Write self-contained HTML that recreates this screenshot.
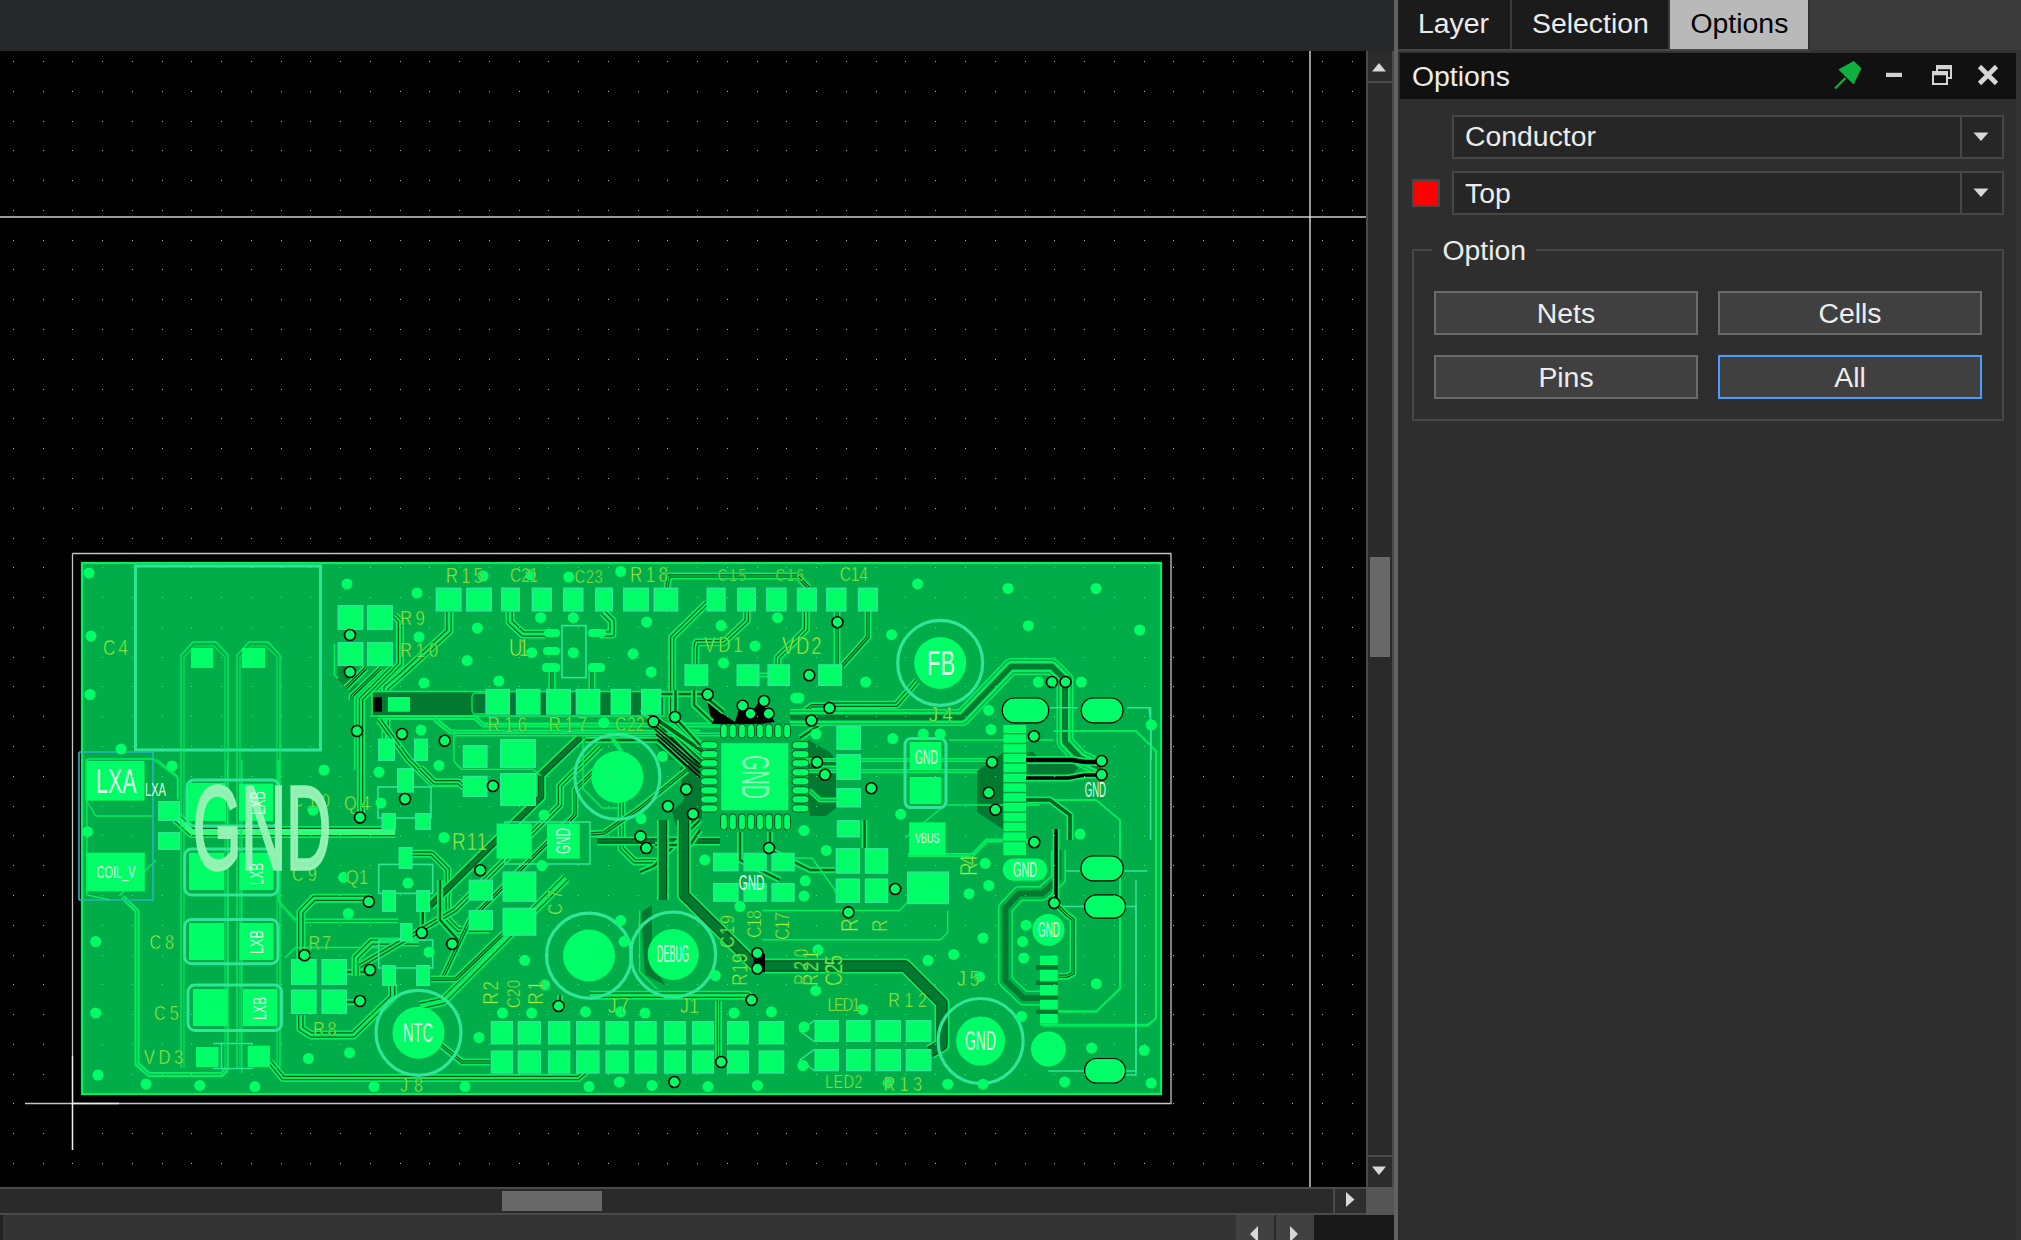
<!DOCTYPE html><html><head><meta charset="utf-8"><style>html,body{margin:0;padding:0}body{width:2021px;height:1240px;overflow:hidden;position:relative;background:#2e2e2e;font-family:'Liberation Sans',sans-serif;}svg{position:absolute;display:block}</style></head><body>
<div style="position:absolute;left:0px;top:0px;width:1394px;height:51px;background:#27282a"></div>
<svg style="left:0;top:51px" width="1366" height="1136" viewBox="0 51 1366 1136">
<rect x="0" y="51" width="1366" height="1136" fill="#000"/>
<path d="M13 61h1v1h-1zM43 61h1v1h-1zM72 61h1v1h-1zM102 61h1v1h-1zM132 61h1v1h-1zM162 61h1v1h-1zM191 61h1v1h-1zM221 61h1v1h-1zM251 61h1v1h-1zM281 61h1v1h-1zM310 61h1v1h-1zM340 61h1v1h-1zM370 61h1v1h-1zM400 61h1v1h-1zM429 61h1v1h-1zM459 61h1v1h-1zM489 61h1v1h-1zM519 61h1v1h-1zM548 61h1v1h-1zM578 61h1v1h-1zM608 61h1v1h-1zM638 61h1v1h-1zM667 61h1v1h-1zM697 61h1v1h-1zM727 61h1v1h-1zM757 61h1v1h-1zM786 61h1v1h-1zM816 61h1v1h-1zM846 61h1v1h-1zM876 61h1v1h-1zM905 61h1v1h-1zM935 61h1v1h-1zM965 61h1v1h-1zM995 61h1v1h-1zM1025 61h1v1h-1zM1054 61h1v1h-1zM1084 61h1v1h-1zM1114 61h1v1h-1zM1144 61h1v1h-1zM1173 61h1v1h-1zM1203 61h1v1h-1zM1233 61h1v1h-1zM1263 61h1v1h-1zM1292 61h1v1h-1zM1322 61h1v1h-1zM1352 61h1v1h-1zM13 91h1v1h-1zM43 91h1v1h-1zM72 91h1v1h-1zM102 91h1v1h-1zM132 91h1v1h-1zM162 91h1v1h-1zM191 91h1v1h-1zM221 91h1v1h-1zM251 91h1v1h-1zM281 91h1v1h-1zM310 91h1v1h-1zM340 91h1v1h-1zM370 91h1v1h-1zM400 91h1v1h-1zM429 91h1v1h-1zM459 91h1v1h-1zM489 91h1v1h-1zM519 91h1v1h-1zM548 91h1v1h-1zM578 91h1v1h-1zM608 91h1v1h-1zM638 91h1v1h-1zM667 91h1v1h-1zM697 91h1v1h-1zM727 91h1v1h-1zM757 91h1v1h-1zM786 91h1v1h-1zM816 91h1v1h-1zM846 91h1v1h-1zM876 91h1v1h-1zM905 91h1v1h-1zM935 91h1v1h-1zM965 91h1v1h-1zM995 91h1v1h-1zM1025 91h1v1h-1zM1054 91h1v1h-1zM1084 91h1v1h-1zM1114 91h1v1h-1zM1144 91h1v1h-1zM1173 91h1v1h-1zM1203 91h1v1h-1zM1233 91h1v1h-1zM1263 91h1v1h-1zM1292 91h1v1h-1zM1322 91h1v1h-1zM1352 91h1v1h-1zM13 121h1v1h-1zM43 121h1v1h-1zM72 121h1v1h-1zM102 121h1v1h-1zM132 121h1v1h-1zM162 121h1v1h-1zM191 121h1v1h-1zM221 121h1v1h-1zM251 121h1v1h-1zM281 121h1v1h-1zM310 121h1v1h-1zM340 121h1v1h-1zM370 121h1v1h-1zM400 121h1v1h-1zM429 121h1v1h-1zM459 121h1v1h-1zM489 121h1v1h-1zM519 121h1v1h-1zM548 121h1v1h-1zM578 121h1v1h-1zM608 121h1v1h-1zM638 121h1v1h-1zM667 121h1v1h-1zM697 121h1v1h-1zM727 121h1v1h-1zM757 121h1v1h-1zM786 121h1v1h-1zM816 121h1v1h-1zM846 121h1v1h-1zM876 121h1v1h-1zM905 121h1v1h-1zM935 121h1v1h-1zM965 121h1v1h-1zM995 121h1v1h-1zM1025 121h1v1h-1zM1054 121h1v1h-1zM1084 121h1v1h-1zM1114 121h1v1h-1zM1144 121h1v1h-1zM1173 121h1v1h-1zM1203 121h1v1h-1zM1233 121h1v1h-1zM1263 121h1v1h-1zM1292 121h1v1h-1zM1322 121h1v1h-1zM1352 121h1v1h-1zM13 150h1v1h-1zM43 150h1v1h-1zM72 150h1v1h-1zM102 150h1v1h-1zM132 150h1v1h-1zM162 150h1v1h-1zM191 150h1v1h-1zM221 150h1v1h-1zM251 150h1v1h-1zM281 150h1v1h-1zM310 150h1v1h-1zM340 150h1v1h-1zM370 150h1v1h-1zM400 150h1v1h-1zM429 150h1v1h-1zM459 150h1v1h-1zM489 150h1v1h-1zM519 150h1v1h-1zM548 150h1v1h-1zM578 150h1v1h-1zM608 150h1v1h-1zM638 150h1v1h-1zM667 150h1v1h-1zM697 150h1v1h-1zM727 150h1v1h-1zM757 150h1v1h-1zM786 150h1v1h-1zM816 150h1v1h-1zM846 150h1v1h-1zM876 150h1v1h-1zM905 150h1v1h-1zM935 150h1v1h-1zM965 150h1v1h-1zM995 150h1v1h-1zM1025 150h1v1h-1zM1054 150h1v1h-1zM1084 150h1v1h-1zM1114 150h1v1h-1zM1144 150h1v1h-1zM1173 150h1v1h-1zM1203 150h1v1h-1zM1233 150h1v1h-1zM1263 150h1v1h-1zM1292 150h1v1h-1zM1322 150h1v1h-1zM1352 150h1v1h-1zM13 180h1v1h-1zM43 180h1v1h-1zM72 180h1v1h-1zM102 180h1v1h-1zM132 180h1v1h-1zM162 180h1v1h-1zM191 180h1v1h-1zM221 180h1v1h-1zM251 180h1v1h-1zM281 180h1v1h-1zM310 180h1v1h-1zM340 180h1v1h-1zM370 180h1v1h-1zM400 180h1v1h-1zM429 180h1v1h-1zM459 180h1v1h-1zM489 180h1v1h-1zM519 180h1v1h-1zM548 180h1v1h-1zM578 180h1v1h-1zM608 180h1v1h-1zM638 180h1v1h-1zM667 180h1v1h-1zM697 180h1v1h-1zM727 180h1v1h-1zM757 180h1v1h-1zM786 180h1v1h-1zM816 180h1v1h-1zM846 180h1v1h-1zM876 180h1v1h-1zM905 180h1v1h-1zM935 180h1v1h-1zM965 180h1v1h-1zM995 180h1v1h-1zM1025 180h1v1h-1zM1054 180h1v1h-1zM1084 180h1v1h-1zM1114 180h1v1h-1zM1144 180h1v1h-1zM1173 180h1v1h-1zM1203 180h1v1h-1zM1233 180h1v1h-1zM1263 180h1v1h-1zM1292 180h1v1h-1zM1322 180h1v1h-1zM1352 180h1v1h-1zM13 210h1v1h-1zM43 210h1v1h-1zM72 210h1v1h-1zM102 210h1v1h-1zM132 210h1v1h-1zM162 210h1v1h-1zM191 210h1v1h-1zM221 210h1v1h-1zM251 210h1v1h-1zM281 210h1v1h-1zM310 210h1v1h-1zM340 210h1v1h-1zM370 210h1v1h-1zM400 210h1v1h-1zM429 210h1v1h-1zM459 210h1v1h-1zM489 210h1v1h-1zM519 210h1v1h-1zM548 210h1v1h-1zM578 210h1v1h-1zM608 210h1v1h-1zM638 210h1v1h-1zM667 210h1v1h-1zM697 210h1v1h-1zM727 210h1v1h-1zM757 210h1v1h-1zM786 210h1v1h-1zM816 210h1v1h-1zM846 210h1v1h-1zM876 210h1v1h-1zM905 210h1v1h-1zM935 210h1v1h-1zM965 210h1v1h-1zM995 210h1v1h-1zM1025 210h1v1h-1zM1054 210h1v1h-1zM1084 210h1v1h-1zM1114 210h1v1h-1zM1144 210h1v1h-1zM1173 210h1v1h-1zM1203 210h1v1h-1zM1233 210h1v1h-1zM1263 210h1v1h-1zM1292 210h1v1h-1zM1322 210h1v1h-1zM1352 210h1v1h-1zM13 240h1v1h-1zM43 240h1v1h-1zM72 240h1v1h-1zM102 240h1v1h-1zM132 240h1v1h-1zM162 240h1v1h-1zM191 240h1v1h-1zM221 240h1v1h-1zM251 240h1v1h-1zM281 240h1v1h-1zM310 240h1v1h-1zM340 240h1v1h-1zM370 240h1v1h-1zM400 240h1v1h-1zM429 240h1v1h-1zM459 240h1v1h-1zM489 240h1v1h-1zM519 240h1v1h-1zM548 240h1v1h-1zM578 240h1v1h-1zM608 240h1v1h-1zM638 240h1v1h-1zM667 240h1v1h-1zM697 240h1v1h-1zM727 240h1v1h-1zM757 240h1v1h-1zM786 240h1v1h-1zM816 240h1v1h-1zM846 240h1v1h-1zM876 240h1v1h-1zM905 240h1v1h-1zM935 240h1v1h-1zM965 240h1v1h-1zM995 240h1v1h-1zM1025 240h1v1h-1zM1054 240h1v1h-1zM1084 240h1v1h-1zM1114 240h1v1h-1zM1144 240h1v1h-1zM1173 240h1v1h-1zM1203 240h1v1h-1zM1233 240h1v1h-1zM1263 240h1v1h-1zM1292 240h1v1h-1zM1322 240h1v1h-1zM1352 240h1v1h-1zM13 269h1v1h-1zM43 269h1v1h-1zM72 269h1v1h-1zM102 269h1v1h-1zM132 269h1v1h-1zM162 269h1v1h-1zM191 269h1v1h-1zM221 269h1v1h-1zM251 269h1v1h-1zM281 269h1v1h-1zM310 269h1v1h-1zM340 269h1v1h-1zM370 269h1v1h-1zM400 269h1v1h-1zM429 269h1v1h-1zM459 269h1v1h-1zM489 269h1v1h-1zM519 269h1v1h-1zM548 269h1v1h-1zM578 269h1v1h-1zM608 269h1v1h-1zM638 269h1v1h-1zM667 269h1v1h-1zM697 269h1v1h-1zM727 269h1v1h-1zM757 269h1v1h-1zM786 269h1v1h-1zM816 269h1v1h-1zM846 269h1v1h-1zM876 269h1v1h-1zM905 269h1v1h-1zM935 269h1v1h-1zM965 269h1v1h-1zM995 269h1v1h-1zM1025 269h1v1h-1zM1054 269h1v1h-1zM1084 269h1v1h-1zM1114 269h1v1h-1zM1144 269h1v1h-1zM1173 269h1v1h-1zM1203 269h1v1h-1zM1233 269h1v1h-1zM1263 269h1v1h-1zM1292 269h1v1h-1zM1322 269h1v1h-1zM1352 269h1v1h-1zM13 299h1v1h-1zM43 299h1v1h-1zM72 299h1v1h-1zM102 299h1v1h-1zM132 299h1v1h-1zM162 299h1v1h-1zM191 299h1v1h-1zM221 299h1v1h-1zM251 299h1v1h-1zM281 299h1v1h-1zM310 299h1v1h-1zM340 299h1v1h-1zM370 299h1v1h-1zM400 299h1v1h-1zM429 299h1v1h-1zM459 299h1v1h-1zM489 299h1v1h-1zM519 299h1v1h-1zM548 299h1v1h-1zM578 299h1v1h-1zM608 299h1v1h-1zM638 299h1v1h-1zM667 299h1v1h-1zM697 299h1v1h-1zM727 299h1v1h-1zM757 299h1v1h-1zM786 299h1v1h-1zM816 299h1v1h-1zM846 299h1v1h-1zM876 299h1v1h-1zM905 299h1v1h-1zM935 299h1v1h-1zM965 299h1v1h-1zM995 299h1v1h-1zM1025 299h1v1h-1zM1054 299h1v1h-1zM1084 299h1v1h-1zM1114 299h1v1h-1zM1144 299h1v1h-1zM1173 299h1v1h-1zM1203 299h1v1h-1zM1233 299h1v1h-1zM1263 299h1v1h-1zM1292 299h1v1h-1zM1322 299h1v1h-1zM1352 299h1v1h-1zM13 329h1v1h-1zM43 329h1v1h-1zM72 329h1v1h-1zM102 329h1v1h-1zM132 329h1v1h-1zM162 329h1v1h-1zM191 329h1v1h-1zM221 329h1v1h-1zM251 329h1v1h-1zM281 329h1v1h-1zM310 329h1v1h-1zM340 329h1v1h-1zM370 329h1v1h-1zM400 329h1v1h-1zM429 329h1v1h-1zM459 329h1v1h-1zM489 329h1v1h-1zM519 329h1v1h-1zM548 329h1v1h-1zM578 329h1v1h-1zM608 329h1v1h-1zM638 329h1v1h-1zM667 329h1v1h-1zM697 329h1v1h-1zM727 329h1v1h-1zM757 329h1v1h-1zM786 329h1v1h-1zM816 329h1v1h-1zM846 329h1v1h-1zM876 329h1v1h-1zM905 329h1v1h-1zM935 329h1v1h-1zM965 329h1v1h-1zM995 329h1v1h-1zM1025 329h1v1h-1zM1054 329h1v1h-1zM1084 329h1v1h-1zM1114 329h1v1h-1zM1144 329h1v1h-1zM1173 329h1v1h-1zM1203 329h1v1h-1zM1233 329h1v1h-1zM1263 329h1v1h-1zM1292 329h1v1h-1zM1322 329h1v1h-1zM1352 329h1v1h-1zM13 359h1v1h-1zM43 359h1v1h-1zM72 359h1v1h-1zM102 359h1v1h-1zM132 359h1v1h-1zM162 359h1v1h-1zM191 359h1v1h-1zM221 359h1v1h-1zM251 359h1v1h-1zM281 359h1v1h-1zM310 359h1v1h-1zM340 359h1v1h-1zM370 359h1v1h-1zM400 359h1v1h-1zM429 359h1v1h-1zM459 359h1v1h-1zM489 359h1v1h-1zM519 359h1v1h-1zM548 359h1v1h-1zM578 359h1v1h-1zM608 359h1v1h-1zM638 359h1v1h-1zM667 359h1v1h-1zM697 359h1v1h-1zM727 359h1v1h-1zM757 359h1v1h-1zM786 359h1v1h-1zM816 359h1v1h-1zM846 359h1v1h-1zM876 359h1v1h-1zM905 359h1v1h-1zM935 359h1v1h-1zM965 359h1v1h-1zM995 359h1v1h-1zM1025 359h1v1h-1zM1054 359h1v1h-1zM1084 359h1v1h-1zM1114 359h1v1h-1zM1144 359h1v1h-1zM1173 359h1v1h-1zM1203 359h1v1h-1zM1233 359h1v1h-1zM1263 359h1v1h-1zM1292 359h1v1h-1zM1322 359h1v1h-1zM1352 359h1v1h-1zM13 389h1v1h-1zM43 389h1v1h-1zM72 389h1v1h-1zM102 389h1v1h-1zM132 389h1v1h-1zM162 389h1v1h-1zM191 389h1v1h-1zM221 389h1v1h-1zM251 389h1v1h-1zM281 389h1v1h-1zM310 389h1v1h-1zM340 389h1v1h-1zM370 389h1v1h-1zM400 389h1v1h-1zM429 389h1v1h-1zM459 389h1v1h-1zM489 389h1v1h-1zM519 389h1v1h-1zM548 389h1v1h-1zM578 389h1v1h-1zM608 389h1v1h-1zM638 389h1v1h-1zM667 389h1v1h-1zM697 389h1v1h-1zM727 389h1v1h-1zM757 389h1v1h-1zM786 389h1v1h-1zM816 389h1v1h-1zM846 389h1v1h-1zM876 389h1v1h-1zM905 389h1v1h-1zM935 389h1v1h-1zM965 389h1v1h-1zM995 389h1v1h-1zM1025 389h1v1h-1zM1054 389h1v1h-1zM1084 389h1v1h-1zM1114 389h1v1h-1zM1144 389h1v1h-1zM1173 389h1v1h-1zM1203 389h1v1h-1zM1233 389h1v1h-1zM1263 389h1v1h-1zM1292 389h1v1h-1zM1322 389h1v1h-1zM1352 389h1v1h-1zM13 418h1v1h-1zM43 418h1v1h-1zM72 418h1v1h-1zM102 418h1v1h-1zM132 418h1v1h-1zM162 418h1v1h-1zM191 418h1v1h-1zM221 418h1v1h-1zM251 418h1v1h-1zM281 418h1v1h-1zM310 418h1v1h-1zM340 418h1v1h-1zM370 418h1v1h-1zM400 418h1v1h-1zM429 418h1v1h-1zM459 418h1v1h-1zM489 418h1v1h-1zM519 418h1v1h-1zM548 418h1v1h-1zM578 418h1v1h-1zM608 418h1v1h-1zM638 418h1v1h-1zM667 418h1v1h-1zM697 418h1v1h-1zM727 418h1v1h-1zM757 418h1v1h-1zM786 418h1v1h-1zM816 418h1v1h-1zM846 418h1v1h-1zM876 418h1v1h-1zM905 418h1v1h-1zM935 418h1v1h-1zM965 418h1v1h-1zM995 418h1v1h-1zM1025 418h1v1h-1zM1054 418h1v1h-1zM1084 418h1v1h-1zM1114 418h1v1h-1zM1144 418h1v1h-1zM1173 418h1v1h-1zM1203 418h1v1h-1zM1233 418h1v1h-1zM1263 418h1v1h-1zM1292 418h1v1h-1zM1322 418h1v1h-1zM1352 418h1v1h-1zM13 448h1v1h-1zM43 448h1v1h-1zM72 448h1v1h-1zM102 448h1v1h-1zM132 448h1v1h-1zM162 448h1v1h-1zM191 448h1v1h-1zM221 448h1v1h-1zM251 448h1v1h-1zM281 448h1v1h-1zM310 448h1v1h-1zM340 448h1v1h-1zM370 448h1v1h-1zM400 448h1v1h-1zM429 448h1v1h-1zM459 448h1v1h-1zM489 448h1v1h-1zM519 448h1v1h-1zM548 448h1v1h-1zM578 448h1v1h-1zM608 448h1v1h-1zM638 448h1v1h-1zM667 448h1v1h-1zM697 448h1v1h-1zM727 448h1v1h-1zM757 448h1v1h-1zM786 448h1v1h-1zM816 448h1v1h-1zM846 448h1v1h-1zM876 448h1v1h-1zM905 448h1v1h-1zM935 448h1v1h-1zM965 448h1v1h-1zM995 448h1v1h-1zM1025 448h1v1h-1zM1054 448h1v1h-1zM1084 448h1v1h-1zM1114 448h1v1h-1zM1144 448h1v1h-1zM1173 448h1v1h-1zM1203 448h1v1h-1zM1233 448h1v1h-1zM1263 448h1v1h-1zM1292 448h1v1h-1zM1322 448h1v1h-1zM1352 448h1v1h-1zM13 478h1v1h-1zM43 478h1v1h-1zM72 478h1v1h-1zM102 478h1v1h-1zM132 478h1v1h-1zM162 478h1v1h-1zM191 478h1v1h-1zM221 478h1v1h-1zM251 478h1v1h-1zM281 478h1v1h-1zM310 478h1v1h-1zM340 478h1v1h-1zM370 478h1v1h-1zM400 478h1v1h-1zM429 478h1v1h-1zM459 478h1v1h-1zM489 478h1v1h-1zM519 478h1v1h-1zM548 478h1v1h-1zM578 478h1v1h-1zM608 478h1v1h-1zM638 478h1v1h-1zM667 478h1v1h-1zM697 478h1v1h-1zM727 478h1v1h-1zM757 478h1v1h-1zM786 478h1v1h-1zM816 478h1v1h-1zM846 478h1v1h-1zM876 478h1v1h-1zM905 478h1v1h-1zM935 478h1v1h-1zM965 478h1v1h-1zM995 478h1v1h-1zM1025 478h1v1h-1zM1054 478h1v1h-1zM1084 478h1v1h-1zM1114 478h1v1h-1zM1144 478h1v1h-1zM1173 478h1v1h-1zM1203 478h1v1h-1zM1233 478h1v1h-1zM1263 478h1v1h-1zM1292 478h1v1h-1zM1322 478h1v1h-1zM1352 478h1v1h-1zM13 508h1v1h-1zM43 508h1v1h-1zM72 508h1v1h-1zM102 508h1v1h-1zM132 508h1v1h-1zM162 508h1v1h-1zM191 508h1v1h-1zM221 508h1v1h-1zM251 508h1v1h-1zM281 508h1v1h-1zM310 508h1v1h-1zM340 508h1v1h-1zM370 508h1v1h-1zM400 508h1v1h-1zM429 508h1v1h-1zM459 508h1v1h-1zM489 508h1v1h-1zM519 508h1v1h-1zM548 508h1v1h-1zM578 508h1v1h-1zM608 508h1v1h-1zM638 508h1v1h-1zM667 508h1v1h-1zM697 508h1v1h-1zM727 508h1v1h-1zM757 508h1v1h-1zM786 508h1v1h-1zM816 508h1v1h-1zM846 508h1v1h-1zM876 508h1v1h-1zM905 508h1v1h-1zM935 508h1v1h-1zM965 508h1v1h-1zM995 508h1v1h-1zM1025 508h1v1h-1zM1054 508h1v1h-1zM1084 508h1v1h-1zM1114 508h1v1h-1zM1144 508h1v1h-1zM1173 508h1v1h-1zM1203 508h1v1h-1zM1233 508h1v1h-1zM1263 508h1v1h-1zM1292 508h1v1h-1zM1322 508h1v1h-1zM1352 508h1v1h-1zM13 538h1v1h-1zM43 538h1v1h-1zM72 538h1v1h-1zM102 538h1v1h-1zM132 538h1v1h-1zM162 538h1v1h-1zM191 538h1v1h-1zM221 538h1v1h-1zM251 538h1v1h-1zM281 538h1v1h-1zM310 538h1v1h-1zM340 538h1v1h-1zM370 538h1v1h-1zM400 538h1v1h-1zM429 538h1v1h-1zM459 538h1v1h-1zM489 538h1v1h-1zM519 538h1v1h-1zM548 538h1v1h-1zM578 538h1v1h-1zM608 538h1v1h-1zM638 538h1v1h-1zM667 538h1v1h-1zM697 538h1v1h-1zM727 538h1v1h-1zM757 538h1v1h-1zM786 538h1v1h-1zM816 538h1v1h-1zM846 538h1v1h-1zM876 538h1v1h-1zM905 538h1v1h-1zM935 538h1v1h-1zM965 538h1v1h-1zM995 538h1v1h-1zM1025 538h1v1h-1zM1054 538h1v1h-1zM1084 538h1v1h-1zM1114 538h1v1h-1zM1144 538h1v1h-1zM1173 538h1v1h-1zM1203 538h1v1h-1zM1233 538h1v1h-1zM1263 538h1v1h-1zM1292 538h1v1h-1zM1322 538h1v1h-1zM1352 538h1v1h-1zM13 567h1v1h-1zM43 567h1v1h-1zM72 567h1v1h-1zM102 567h1v1h-1zM132 567h1v1h-1zM162 567h1v1h-1zM191 567h1v1h-1zM221 567h1v1h-1zM251 567h1v1h-1zM281 567h1v1h-1zM310 567h1v1h-1zM340 567h1v1h-1zM370 567h1v1h-1zM400 567h1v1h-1zM429 567h1v1h-1zM459 567h1v1h-1zM489 567h1v1h-1zM519 567h1v1h-1zM548 567h1v1h-1zM578 567h1v1h-1zM608 567h1v1h-1zM638 567h1v1h-1zM667 567h1v1h-1zM697 567h1v1h-1zM727 567h1v1h-1zM757 567h1v1h-1zM786 567h1v1h-1zM816 567h1v1h-1zM846 567h1v1h-1zM876 567h1v1h-1zM905 567h1v1h-1zM935 567h1v1h-1zM965 567h1v1h-1zM995 567h1v1h-1zM1025 567h1v1h-1zM1054 567h1v1h-1zM1084 567h1v1h-1zM1114 567h1v1h-1zM1144 567h1v1h-1zM1173 567h1v1h-1zM1203 567h1v1h-1zM1233 567h1v1h-1zM1263 567h1v1h-1zM1292 567h1v1h-1zM1322 567h1v1h-1zM1352 567h1v1h-1zM13 597h1v1h-1zM43 597h1v1h-1zM72 597h1v1h-1zM102 597h1v1h-1zM132 597h1v1h-1zM162 597h1v1h-1zM191 597h1v1h-1zM221 597h1v1h-1zM251 597h1v1h-1zM281 597h1v1h-1zM310 597h1v1h-1zM340 597h1v1h-1zM370 597h1v1h-1zM400 597h1v1h-1zM429 597h1v1h-1zM459 597h1v1h-1zM489 597h1v1h-1zM519 597h1v1h-1zM548 597h1v1h-1zM578 597h1v1h-1zM608 597h1v1h-1zM638 597h1v1h-1zM667 597h1v1h-1zM697 597h1v1h-1zM727 597h1v1h-1zM757 597h1v1h-1zM786 597h1v1h-1zM816 597h1v1h-1zM846 597h1v1h-1zM876 597h1v1h-1zM905 597h1v1h-1zM935 597h1v1h-1zM965 597h1v1h-1zM995 597h1v1h-1zM1025 597h1v1h-1zM1054 597h1v1h-1zM1084 597h1v1h-1zM1114 597h1v1h-1zM1144 597h1v1h-1zM1173 597h1v1h-1zM1203 597h1v1h-1zM1233 597h1v1h-1zM1263 597h1v1h-1zM1292 597h1v1h-1zM1322 597h1v1h-1zM1352 597h1v1h-1zM13 627h1v1h-1zM43 627h1v1h-1zM72 627h1v1h-1zM102 627h1v1h-1zM132 627h1v1h-1zM162 627h1v1h-1zM191 627h1v1h-1zM221 627h1v1h-1zM251 627h1v1h-1zM281 627h1v1h-1zM310 627h1v1h-1zM340 627h1v1h-1zM370 627h1v1h-1zM400 627h1v1h-1zM429 627h1v1h-1zM459 627h1v1h-1zM489 627h1v1h-1zM519 627h1v1h-1zM548 627h1v1h-1zM578 627h1v1h-1zM608 627h1v1h-1zM638 627h1v1h-1zM667 627h1v1h-1zM697 627h1v1h-1zM727 627h1v1h-1zM757 627h1v1h-1zM786 627h1v1h-1zM816 627h1v1h-1zM846 627h1v1h-1zM876 627h1v1h-1zM905 627h1v1h-1zM935 627h1v1h-1zM965 627h1v1h-1zM995 627h1v1h-1zM1025 627h1v1h-1zM1054 627h1v1h-1zM1084 627h1v1h-1zM1114 627h1v1h-1zM1144 627h1v1h-1zM1173 627h1v1h-1zM1203 627h1v1h-1zM1233 627h1v1h-1zM1263 627h1v1h-1zM1292 627h1v1h-1zM1322 627h1v1h-1zM1352 627h1v1h-1zM13 657h1v1h-1zM43 657h1v1h-1zM72 657h1v1h-1zM102 657h1v1h-1zM132 657h1v1h-1zM162 657h1v1h-1zM191 657h1v1h-1zM221 657h1v1h-1zM251 657h1v1h-1zM281 657h1v1h-1zM310 657h1v1h-1zM340 657h1v1h-1zM370 657h1v1h-1zM400 657h1v1h-1zM429 657h1v1h-1zM459 657h1v1h-1zM489 657h1v1h-1zM519 657h1v1h-1zM548 657h1v1h-1zM578 657h1v1h-1zM608 657h1v1h-1zM638 657h1v1h-1zM667 657h1v1h-1zM697 657h1v1h-1zM727 657h1v1h-1zM757 657h1v1h-1zM786 657h1v1h-1zM816 657h1v1h-1zM846 657h1v1h-1zM876 657h1v1h-1zM905 657h1v1h-1zM935 657h1v1h-1zM965 657h1v1h-1zM995 657h1v1h-1zM1025 657h1v1h-1zM1054 657h1v1h-1zM1084 657h1v1h-1zM1114 657h1v1h-1zM1144 657h1v1h-1zM1173 657h1v1h-1zM1203 657h1v1h-1zM1233 657h1v1h-1zM1263 657h1v1h-1zM1292 657h1v1h-1zM1322 657h1v1h-1zM1352 657h1v1h-1zM13 686h1v1h-1zM43 686h1v1h-1zM72 686h1v1h-1zM102 686h1v1h-1zM132 686h1v1h-1zM162 686h1v1h-1zM191 686h1v1h-1zM221 686h1v1h-1zM251 686h1v1h-1zM281 686h1v1h-1zM310 686h1v1h-1zM340 686h1v1h-1zM370 686h1v1h-1zM400 686h1v1h-1zM429 686h1v1h-1zM459 686h1v1h-1zM489 686h1v1h-1zM519 686h1v1h-1zM548 686h1v1h-1zM578 686h1v1h-1zM608 686h1v1h-1zM638 686h1v1h-1zM667 686h1v1h-1zM697 686h1v1h-1zM727 686h1v1h-1zM757 686h1v1h-1zM786 686h1v1h-1zM816 686h1v1h-1zM846 686h1v1h-1zM876 686h1v1h-1zM905 686h1v1h-1zM935 686h1v1h-1zM965 686h1v1h-1zM995 686h1v1h-1zM1025 686h1v1h-1zM1054 686h1v1h-1zM1084 686h1v1h-1zM1114 686h1v1h-1zM1144 686h1v1h-1zM1173 686h1v1h-1zM1203 686h1v1h-1zM1233 686h1v1h-1zM1263 686h1v1h-1zM1292 686h1v1h-1zM1322 686h1v1h-1zM1352 686h1v1h-1zM13 716h1v1h-1zM43 716h1v1h-1zM72 716h1v1h-1zM102 716h1v1h-1zM132 716h1v1h-1zM162 716h1v1h-1zM191 716h1v1h-1zM221 716h1v1h-1zM251 716h1v1h-1zM281 716h1v1h-1zM310 716h1v1h-1zM340 716h1v1h-1zM370 716h1v1h-1zM400 716h1v1h-1zM429 716h1v1h-1zM459 716h1v1h-1zM489 716h1v1h-1zM519 716h1v1h-1zM548 716h1v1h-1zM578 716h1v1h-1zM608 716h1v1h-1zM638 716h1v1h-1zM667 716h1v1h-1zM697 716h1v1h-1zM727 716h1v1h-1zM757 716h1v1h-1zM786 716h1v1h-1zM816 716h1v1h-1zM846 716h1v1h-1zM876 716h1v1h-1zM905 716h1v1h-1zM935 716h1v1h-1zM965 716h1v1h-1zM995 716h1v1h-1zM1025 716h1v1h-1zM1054 716h1v1h-1zM1084 716h1v1h-1zM1114 716h1v1h-1zM1144 716h1v1h-1zM1173 716h1v1h-1zM1203 716h1v1h-1zM1233 716h1v1h-1zM1263 716h1v1h-1zM1292 716h1v1h-1zM1322 716h1v1h-1zM1352 716h1v1h-1zM13 746h1v1h-1zM43 746h1v1h-1zM72 746h1v1h-1zM102 746h1v1h-1zM132 746h1v1h-1zM162 746h1v1h-1zM191 746h1v1h-1zM221 746h1v1h-1zM251 746h1v1h-1zM281 746h1v1h-1zM310 746h1v1h-1zM340 746h1v1h-1zM370 746h1v1h-1zM400 746h1v1h-1zM429 746h1v1h-1zM459 746h1v1h-1zM489 746h1v1h-1zM519 746h1v1h-1zM548 746h1v1h-1zM578 746h1v1h-1zM608 746h1v1h-1zM638 746h1v1h-1zM667 746h1v1h-1zM697 746h1v1h-1zM727 746h1v1h-1zM757 746h1v1h-1zM786 746h1v1h-1zM816 746h1v1h-1zM846 746h1v1h-1zM876 746h1v1h-1zM905 746h1v1h-1zM935 746h1v1h-1zM965 746h1v1h-1zM995 746h1v1h-1zM1025 746h1v1h-1zM1054 746h1v1h-1zM1084 746h1v1h-1zM1114 746h1v1h-1zM1144 746h1v1h-1zM1173 746h1v1h-1zM1203 746h1v1h-1zM1233 746h1v1h-1zM1263 746h1v1h-1zM1292 746h1v1h-1zM1322 746h1v1h-1zM1352 746h1v1h-1zM13 776h1v1h-1zM43 776h1v1h-1zM72 776h1v1h-1zM102 776h1v1h-1zM132 776h1v1h-1zM162 776h1v1h-1zM191 776h1v1h-1zM221 776h1v1h-1zM251 776h1v1h-1zM281 776h1v1h-1zM310 776h1v1h-1zM340 776h1v1h-1zM370 776h1v1h-1zM400 776h1v1h-1zM429 776h1v1h-1zM459 776h1v1h-1zM489 776h1v1h-1zM519 776h1v1h-1zM548 776h1v1h-1zM578 776h1v1h-1zM608 776h1v1h-1zM638 776h1v1h-1zM667 776h1v1h-1zM697 776h1v1h-1zM727 776h1v1h-1zM757 776h1v1h-1zM786 776h1v1h-1zM816 776h1v1h-1zM846 776h1v1h-1zM876 776h1v1h-1zM905 776h1v1h-1zM935 776h1v1h-1zM965 776h1v1h-1zM995 776h1v1h-1zM1025 776h1v1h-1zM1054 776h1v1h-1zM1084 776h1v1h-1zM1114 776h1v1h-1zM1144 776h1v1h-1zM1173 776h1v1h-1zM1203 776h1v1h-1zM1233 776h1v1h-1zM1263 776h1v1h-1zM1292 776h1v1h-1zM1322 776h1v1h-1zM1352 776h1v1h-1zM13 806h1v1h-1zM43 806h1v1h-1zM72 806h1v1h-1zM102 806h1v1h-1zM132 806h1v1h-1zM162 806h1v1h-1zM191 806h1v1h-1zM221 806h1v1h-1zM251 806h1v1h-1zM281 806h1v1h-1zM310 806h1v1h-1zM340 806h1v1h-1zM370 806h1v1h-1zM400 806h1v1h-1zM429 806h1v1h-1zM459 806h1v1h-1zM489 806h1v1h-1zM519 806h1v1h-1zM548 806h1v1h-1zM578 806h1v1h-1zM608 806h1v1h-1zM638 806h1v1h-1zM667 806h1v1h-1zM697 806h1v1h-1zM727 806h1v1h-1zM757 806h1v1h-1zM786 806h1v1h-1zM816 806h1v1h-1zM846 806h1v1h-1zM876 806h1v1h-1zM905 806h1v1h-1zM935 806h1v1h-1zM965 806h1v1h-1zM995 806h1v1h-1zM1025 806h1v1h-1zM1054 806h1v1h-1zM1084 806h1v1h-1zM1114 806h1v1h-1zM1144 806h1v1h-1zM1173 806h1v1h-1zM1203 806h1v1h-1zM1233 806h1v1h-1zM1263 806h1v1h-1zM1292 806h1v1h-1zM1322 806h1v1h-1zM1352 806h1v1h-1zM13 835h1v1h-1zM43 835h1v1h-1zM72 835h1v1h-1zM102 835h1v1h-1zM132 835h1v1h-1zM162 835h1v1h-1zM191 835h1v1h-1zM221 835h1v1h-1zM251 835h1v1h-1zM281 835h1v1h-1zM310 835h1v1h-1zM340 835h1v1h-1zM370 835h1v1h-1zM400 835h1v1h-1zM429 835h1v1h-1zM459 835h1v1h-1zM489 835h1v1h-1zM519 835h1v1h-1zM548 835h1v1h-1zM578 835h1v1h-1zM608 835h1v1h-1zM638 835h1v1h-1zM667 835h1v1h-1zM697 835h1v1h-1zM727 835h1v1h-1zM757 835h1v1h-1zM786 835h1v1h-1zM816 835h1v1h-1zM846 835h1v1h-1zM876 835h1v1h-1zM905 835h1v1h-1zM935 835h1v1h-1zM965 835h1v1h-1zM995 835h1v1h-1zM1025 835h1v1h-1zM1054 835h1v1h-1zM1084 835h1v1h-1zM1114 835h1v1h-1zM1144 835h1v1h-1zM1173 835h1v1h-1zM1203 835h1v1h-1zM1233 835h1v1h-1zM1263 835h1v1h-1zM1292 835h1v1h-1zM1322 835h1v1h-1zM1352 835h1v1h-1zM13 865h1v1h-1zM43 865h1v1h-1zM72 865h1v1h-1zM102 865h1v1h-1zM132 865h1v1h-1zM162 865h1v1h-1zM191 865h1v1h-1zM221 865h1v1h-1zM251 865h1v1h-1zM281 865h1v1h-1zM310 865h1v1h-1zM340 865h1v1h-1zM370 865h1v1h-1zM400 865h1v1h-1zM429 865h1v1h-1zM459 865h1v1h-1zM489 865h1v1h-1zM519 865h1v1h-1zM548 865h1v1h-1zM578 865h1v1h-1zM608 865h1v1h-1zM638 865h1v1h-1zM667 865h1v1h-1zM697 865h1v1h-1zM727 865h1v1h-1zM757 865h1v1h-1zM786 865h1v1h-1zM816 865h1v1h-1zM846 865h1v1h-1zM876 865h1v1h-1zM905 865h1v1h-1zM935 865h1v1h-1zM965 865h1v1h-1zM995 865h1v1h-1zM1025 865h1v1h-1zM1054 865h1v1h-1zM1084 865h1v1h-1zM1114 865h1v1h-1zM1144 865h1v1h-1zM1173 865h1v1h-1zM1203 865h1v1h-1zM1233 865h1v1h-1zM1263 865h1v1h-1zM1292 865h1v1h-1zM1322 865h1v1h-1zM1352 865h1v1h-1zM13 895h1v1h-1zM43 895h1v1h-1zM72 895h1v1h-1zM102 895h1v1h-1zM132 895h1v1h-1zM162 895h1v1h-1zM191 895h1v1h-1zM221 895h1v1h-1zM251 895h1v1h-1zM281 895h1v1h-1zM310 895h1v1h-1zM340 895h1v1h-1zM370 895h1v1h-1zM400 895h1v1h-1zM429 895h1v1h-1zM459 895h1v1h-1zM489 895h1v1h-1zM519 895h1v1h-1zM548 895h1v1h-1zM578 895h1v1h-1zM608 895h1v1h-1zM638 895h1v1h-1zM667 895h1v1h-1zM697 895h1v1h-1zM727 895h1v1h-1zM757 895h1v1h-1zM786 895h1v1h-1zM816 895h1v1h-1zM846 895h1v1h-1zM876 895h1v1h-1zM905 895h1v1h-1zM935 895h1v1h-1zM965 895h1v1h-1zM995 895h1v1h-1zM1025 895h1v1h-1zM1054 895h1v1h-1zM1084 895h1v1h-1zM1114 895h1v1h-1zM1144 895h1v1h-1zM1173 895h1v1h-1zM1203 895h1v1h-1zM1233 895h1v1h-1zM1263 895h1v1h-1zM1292 895h1v1h-1zM1322 895h1v1h-1zM1352 895h1v1h-1zM13 925h1v1h-1zM43 925h1v1h-1zM72 925h1v1h-1zM102 925h1v1h-1zM132 925h1v1h-1zM162 925h1v1h-1zM191 925h1v1h-1zM221 925h1v1h-1zM251 925h1v1h-1zM281 925h1v1h-1zM310 925h1v1h-1zM340 925h1v1h-1zM370 925h1v1h-1zM400 925h1v1h-1zM429 925h1v1h-1zM459 925h1v1h-1zM489 925h1v1h-1zM519 925h1v1h-1zM548 925h1v1h-1zM578 925h1v1h-1zM608 925h1v1h-1zM638 925h1v1h-1zM667 925h1v1h-1zM697 925h1v1h-1zM727 925h1v1h-1zM757 925h1v1h-1zM786 925h1v1h-1zM816 925h1v1h-1zM846 925h1v1h-1zM876 925h1v1h-1zM905 925h1v1h-1zM935 925h1v1h-1zM965 925h1v1h-1zM995 925h1v1h-1zM1025 925h1v1h-1zM1054 925h1v1h-1zM1084 925h1v1h-1zM1114 925h1v1h-1zM1144 925h1v1h-1zM1173 925h1v1h-1zM1203 925h1v1h-1zM1233 925h1v1h-1zM1263 925h1v1h-1zM1292 925h1v1h-1zM1322 925h1v1h-1zM1352 925h1v1h-1zM13 955h1v1h-1zM43 955h1v1h-1zM72 955h1v1h-1zM102 955h1v1h-1zM132 955h1v1h-1zM162 955h1v1h-1zM191 955h1v1h-1zM221 955h1v1h-1zM251 955h1v1h-1zM281 955h1v1h-1zM310 955h1v1h-1zM340 955h1v1h-1zM370 955h1v1h-1zM400 955h1v1h-1zM429 955h1v1h-1zM459 955h1v1h-1zM489 955h1v1h-1zM519 955h1v1h-1zM548 955h1v1h-1zM578 955h1v1h-1zM608 955h1v1h-1zM638 955h1v1h-1zM667 955h1v1h-1zM697 955h1v1h-1zM727 955h1v1h-1zM757 955h1v1h-1zM786 955h1v1h-1zM816 955h1v1h-1zM846 955h1v1h-1zM876 955h1v1h-1zM905 955h1v1h-1zM935 955h1v1h-1zM965 955h1v1h-1zM995 955h1v1h-1zM1025 955h1v1h-1zM1054 955h1v1h-1zM1084 955h1v1h-1zM1114 955h1v1h-1zM1144 955h1v1h-1zM1173 955h1v1h-1zM1203 955h1v1h-1zM1233 955h1v1h-1zM1263 955h1v1h-1zM1292 955h1v1h-1zM1322 955h1v1h-1zM1352 955h1v1h-1zM13 984h1v1h-1zM43 984h1v1h-1zM72 984h1v1h-1zM102 984h1v1h-1zM132 984h1v1h-1zM162 984h1v1h-1zM191 984h1v1h-1zM221 984h1v1h-1zM251 984h1v1h-1zM281 984h1v1h-1zM310 984h1v1h-1zM340 984h1v1h-1zM370 984h1v1h-1zM400 984h1v1h-1zM429 984h1v1h-1zM459 984h1v1h-1zM489 984h1v1h-1zM519 984h1v1h-1zM548 984h1v1h-1zM578 984h1v1h-1zM608 984h1v1h-1zM638 984h1v1h-1zM667 984h1v1h-1zM697 984h1v1h-1zM727 984h1v1h-1zM757 984h1v1h-1zM786 984h1v1h-1zM816 984h1v1h-1zM846 984h1v1h-1zM876 984h1v1h-1zM905 984h1v1h-1zM935 984h1v1h-1zM965 984h1v1h-1zM995 984h1v1h-1zM1025 984h1v1h-1zM1054 984h1v1h-1zM1084 984h1v1h-1zM1114 984h1v1h-1zM1144 984h1v1h-1zM1173 984h1v1h-1zM1203 984h1v1h-1zM1233 984h1v1h-1zM1263 984h1v1h-1zM1292 984h1v1h-1zM1322 984h1v1h-1zM1352 984h1v1h-1zM13 1014h1v1h-1zM43 1014h1v1h-1zM72 1014h1v1h-1zM102 1014h1v1h-1zM132 1014h1v1h-1zM162 1014h1v1h-1zM191 1014h1v1h-1zM221 1014h1v1h-1zM251 1014h1v1h-1zM281 1014h1v1h-1zM310 1014h1v1h-1zM340 1014h1v1h-1zM370 1014h1v1h-1zM400 1014h1v1h-1zM429 1014h1v1h-1zM459 1014h1v1h-1zM489 1014h1v1h-1zM519 1014h1v1h-1zM548 1014h1v1h-1zM578 1014h1v1h-1zM608 1014h1v1h-1zM638 1014h1v1h-1zM667 1014h1v1h-1zM697 1014h1v1h-1zM727 1014h1v1h-1zM757 1014h1v1h-1zM786 1014h1v1h-1zM816 1014h1v1h-1zM846 1014h1v1h-1zM876 1014h1v1h-1zM905 1014h1v1h-1zM935 1014h1v1h-1zM965 1014h1v1h-1zM995 1014h1v1h-1zM1025 1014h1v1h-1zM1054 1014h1v1h-1zM1084 1014h1v1h-1zM1114 1014h1v1h-1zM1144 1014h1v1h-1zM1173 1014h1v1h-1zM1203 1014h1v1h-1zM1233 1014h1v1h-1zM1263 1014h1v1h-1zM1292 1014h1v1h-1zM1322 1014h1v1h-1zM1352 1014h1v1h-1zM13 1044h1v1h-1zM43 1044h1v1h-1zM72 1044h1v1h-1zM102 1044h1v1h-1zM132 1044h1v1h-1zM162 1044h1v1h-1zM191 1044h1v1h-1zM221 1044h1v1h-1zM251 1044h1v1h-1zM281 1044h1v1h-1zM310 1044h1v1h-1zM340 1044h1v1h-1zM370 1044h1v1h-1zM400 1044h1v1h-1zM429 1044h1v1h-1zM459 1044h1v1h-1zM489 1044h1v1h-1zM519 1044h1v1h-1zM548 1044h1v1h-1zM578 1044h1v1h-1zM608 1044h1v1h-1zM638 1044h1v1h-1zM667 1044h1v1h-1zM697 1044h1v1h-1zM727 1044h1v1h-1zM757 1044h1v1h-1zM786 1044h1v1h-1zM816 1044h1v1h-1zM846 1044h1v1h-1zM876 1044h1v1h-1zM905 1044h1v1h-1zM935 1044h1v1h-1zM965 1044h1v1h-1zM995 1044h1v1h-1zM1025 1044h1v1h-1zM1054 1044h1v1h-1zM1084 1044h1v1h-1zM1114 1044h1v1h-1zM1144 1044h1v1h-1zM1173 1044h1v1h-1zM1203 1044h1v1h-1zM1233 1044h1v1h-1zM1263 1044h1v1h-1zM1292 1044h1v1h-1zM1322 1044h1v1h-1zM1352 1044h1v1h-1zM13 1074h1v1h-1zM43 1074h1v1h-1zM72 1074h1v1h-1zM102 1074h1v1h-1zM132 1074h1v1h-1zM162 1074h1v1h-1zM191 1074h1v1h-1zM221 1074h1v1h-1zM251 1074h1v1h-1zM281 1074h1v1h-1zM310 1074h1v1h-1zM340 1074h1v1h-1zM370 1074h1v1h-1zM400 1074h1v1h-1zM429 1074h1v1h-1zM459 1074h1v1h-1zM489 1074h1v1h-1zM519 1074h1v1h-1zM548 1074h1v1h-1zM578 1074h1v1h-1zM608 1074h1v1h-1zM638 1074h1v1h-1zM667 1074h1v1h-1zM697 1074h1v1h-1zM727 1074h1v1h-1zM757 1074h1v1h-1zM786 1074h1v1h-1zM816 1074h1v1h-1zM846 1074h1v1h-1zM876 1074h1v1h-1zM905 1074h1v1h-1zM935 1074h1v1h-1zM965 1074h1v1h-1zM995 1074h1v1h-1zM1025 1074h1v1h-1zM1054 1074h1v1h-1zM1084 1074h1v1h-1zM1114 1074h1v1h-1zM1144 1074h1v1h-1zM1173 1074h1v1h-1zM1203 1074h1v1h-1zM1233 1074h1v1h-1zM1263 1074h1v1h-1zM1292 1074h1v1h-1zM1322 1074h1v1h-1zM1352 1074h1v1h-1zM13 1103h1v1h-1zM43 1103h1v1h-1zM72 1103h1v1h-1zM102 1103h1v1h-1zM132 1103h1v1h-1zM162 1103h1v1h-1zM191 1103h1v1h-1zM221 1103h1v1h-1zM251 1103h1v1h-1zM281 1103h1v1h-1zM310 1103h1v1h-1zM340 1103h1v1h-1zM370 1103h1v1h-1zM400 1103h1v1h-1zM429 1103h1v1h-1zM459 1103h1v1h-1zM489 1103h1v1h-1zM519 1103h1v1h-1zM548 1103h1v1h-1zM578 1103h1v1h-1zM608 1103h1v1h-1zM638 1103h1v1h-1zM667 1103h1v1h-1zM697 1103h1v1h-1zM727 1103h1v1h-1zM757 1103h1v1h-1zM786 1103h1v1h-1zM816 1103h1v1h-1zM846 1103h1v1h-1zM876 1103h1v1h-1zM905 1103h1v1h-1zM935 1103h1v1h-1zM965 1103h1v1h-1zM995 1103h1v1h-1zM1025 1103h1v1h-1zM1054 1103h1v1h-1zM1084 1103h1v1h-1zM1114 1103h1v1h-1zM1144 1103h1v1h-1zM1173 1103h1v1h-1zM1203 1103h1v1h-1zM1233 1103h1v1h-1zM1263 1103h1v1h-1zM1292 1103h1v1h-1zM1322 1103h1v1h-1zM1352 1103h1v1h-1zM13 1133h1v1h-1zM43 1133h1v1h-1zM72 1133h1v1h-1zM102 1133h1v1h-1zM132 1133h1v1h-1zM162 1133h1v1h-1zM191 1133h1v1h-1zM221 1133h1v1h-1zM251 1133h1v1h-1zM281 1133h1v1h-1zM310 1133h1v1h-1zM340 1133h1v1h-1zM370 1133h1v1h-1zM400 1133h1v1h-1zM429 1133h1v1h-1zM459 1133h1v1h-1zM489 1133h1v1h-1zM519 1133h1v1h-1zM548 1133h1v1h-1zM578 1133h1v1h-1zM608 1133h1v1h-1zM638 1133h1v1h-1zM667 1133h1v1h-1zM697 1133h1v1h-1zM727 1133h1v1h-1zM757 1133h1v1h-1zM786 1133h1v1h-1zM816 1133h1v1h-1zM846 1133h1v1h-1zM876 1133h1v1h-1zM905 1133h1v1h-1zM935 1133h1v1h-1zM965 1133h1v1h-1zM995 1133h1v1h-1zM1025 1133h1v1h-1zM1054 1133h1v1h-1zM1084 1133h1v1h-1zM1114 1133h1v1h-1zM1144 1133h1v1h-1zM1173 1133h1v1h-1zM1203 1133h1v1h-1zM1233 1133h1v1h-1zM1263 1133h1v1h-1zM1292 1133h1v1h-1zM1322 1133h1v1h-1zM1352 1133h1v1h-1zM13 1163h1v1h-1zM43 1163h1v1h-1zM72 1163h1v1h-1zM102 1163h1v1h-1zM132 1163h1v1h-1zM162 1163h1v1h-1zM191 1163h1v1h-1zM221 1163h1v1h-1zM251 1163h1v1h-1zM281 1163h1v1h-1zM310 1163h1v1h-1zM340 1163h1v1h-1zM370 1163h1v1h-1zM400 1163h1v1h-1zM429 1163h1v1h-1zM459 1163h1v1h-1zM489 1163h1v1h-1zM519 1163h1v1h-1zM548 1163h1v1h-1zM578 1163h1v1h-1zM608 1163h1v1h-1zM638 1163h1v1h-1zM667 1163h1v1h-1zM697 1163h1v1h-1zM727 1163h1v1h-1zM757 1163h1v1h-1zM786 1163h1v1h-1zM816 1163h1v1h-1zM846 1163h1v1h-1zM876 1163h1v1h-1zM905 1163h1v1h-1zM935 1163h1v1h-1zM965 1163h1v1h-1zM995 1163h1v1h-1zM1025 1163h1v1h-1zM1054 1163h1v1h-1zM1084 1163h1v1h-1zM1114 1163h1v1h-1zM1144 1163h1v1h-1zM1173 1163h1v1h-1zM1203 1163h1v1h-1zM1233 1163h1v1h-1zM1263 1163h1v1h-1zM1292 1163h1v1h-1zM1322 1163h1v1h-1zM1352 1163h1v1h-1z" fill="#b4b4b4"/>
<rect x="0" y="216" width="1366" height="2" fill="#9a9a9a"/><rect x="1309" y="51" width="2" height="1136" fill="#9a9a9a"/><rect x="1309" y="216" width="2" height="2" fill="#cfcfcf"/>
<rect x="82" y="563" width="1079" height="531" fill="#00ad49" stroke="#00f060" stroke-width="2.2"/><path d="M72.5 553.5 H1171 V1103.5 H25 M72.5 553.5 V1150" fill="none" stroke="#c4c4c4" stroke-width="1.3"/><path d="M72.5 1103.5 H119 M72.5 1056 V1150" fill="none" stroke="#eeeeee" stroke-width="1.3"/><path d="M680 768 L700 752 L702 818 L690 826 L676 826 L672 812 L684 800 Z" fill="#007a30"/><path d="M808 740 L830 752 L836 760 L836 808 L826 816 L810 816 L808 800 Z" fill="#007a30"/><path d="M636 722 L660 716 L700 752 L690 760 L668 760 Z" fill="#008a36"/><path d="M122.5,897 L137,911 L137,1064 L149,1074.5 L222,1074.5 L227,1068" fill="none" stroke="#00f060" stroke-width="5" stroke-linejoin="round"/><path d="M122.5,897 L137,911 L137,1064 L149,1074.5 L222,1074.5 L227,1068" fill="none" stroke="#00ad49" stroke-width="-1" stroke-linejoin="round"/><path d="M86,759 L86,800 L96,816 L154,816" fill="none" stroke="#00f060" stroke-width="1.4" stroke-linejoin="round"/><path d="M156.5,759.3 L177.5,776.4 L177.5,798.7" fill="none" stroke="#00f060" stroke-width="1.4" stroke-linejoin="round"/><path d="M119,896 L140,876 L156,860" fill="none" stroke="#00f060" stroke-width="1.4" stroke-linejoin="round"/><path d="M176,817 L192,832 L395,832" fill="none" stroke="#00f060" stroke-width="12" stroke-linejoin="round"/><path d="M176,817 L192,832 L395,832" fill="none" stroke="#005a20" stroke-width="8.4" stroke-linejoin="round"/><path d="M176,817 L192,832 L395,832" fill="none" stroke="#2cff7e" stroke-width="6" stroke-linejoin="round"/><path d="M227.4,760 L227.4,1073" fill="none" stroke="#00f060" stroke-width="1.3" stroke-linejoin="round"/><path d="M241.8,760 L241.8,1073" fill="none" stroke="#00f060" stroke-width="1.3" stroke-linejoin="round"/><path d="M278.5,760 L278.5,901 L295.5,919.3 L398,919.3" fill="none" stroke="#00f060" stroke-width="1.4" stroke-linejoin="round"/><path d="M280,905 L296,922.5 L398,922.5" fill="none" stroke="#00f060" stroke-width="1" stroke-linejoin="round"/><path d="M300.8,980 L300.8,912 L314,898.3 L369,898.3" fill="none" stroke="#00f060" stroke-width="9" stroke-linejoin="round"/><path d="M300.8,980 L300.8,912 L314,898.3 L369,898.3" fill="none" stroke="#005a1e" stroke-width="5.4" stroke-linejoin="round"/><path d="M300.8,980 L300.8,912 L314,898.3 L369,898.3" fill="none" stroke="#00f060" stroke-width="3" stroke-linejoin="round"/><path d="M285,957.7 L295.5,947.5 L378,947.5" fill="none" stroke="#00f060" stroke-width="1.4" stroke-linejoin="round"/><path d="M300.8,1015 L300.8,1028.5 L311.3,1035 L353.2,1035 L392.6,997 L392.6,984" fill="none" stroke="#00f060" stroke-width="9" stroke-linejoin="round"/><path d="M300.8,1015 L300.8,1028.5 L311.3,1035 L353.2,1035 L392.6,997 L392.6,984" fill="none" stroke="#005a1e" stroke-width="5.4" stroke-linejoin="round"/><path d="M300.8,1015 L300.8,1028.5 L311.3,1035 L353.2,1035 L392.6,997 L392.6,984" fill="none" stroke="#00f060" stroke-width="3" stroke-linejoin="round"/><path d="M347,972 L370,972" fill="none" stroke="#00f060" stroke-width="6" stroke-linejoin="round"/><path d="M347,972 L370,972" fill="none" stroke="#005a1e" stroke-width="2.4" stroke-linejoin="round"/><path d="M347,972 L370,972" fill="none" stroke="#00f060" stroke-width="0" stroke-linejoin="round"/><path d="M347,1002 L360,1002" fill="none" stroke="#00f060" stroke-width="6" stroke-linejoin="round"/><path d="M347,1002 L360,1002" fill="none" stroke="#005a1e" stroke-width="2.4" stroke-linejoin="round"/><path d="M347,1002 L360,1002" fill="none" stroke="#00f060" stroke-width="0" stroke-linejoin="round"/><path d="M355.9,976 L355.9,957.7 L371.6,942 L418.8,942" fill="none" stroke="#00f060" stroke-width="9" stroke-linejoin="round"/><path d="M355.9,976 L355.9,957.7 L371.6,942 L418.8,942" fill="none" stroke="#005a1e" stroke-width="5.4" stroke-linejoin="round"/><path d="M355.9,976 L355.9,957.7 L371.6,942 L418.8,942" fill="none" stroke="#00f060" stroke-width="3" stroke-linejoin="round"/><path d="M270,1062 L283,1078 L578,1078 L590,1068" fill="none" stroke="#00f060" stroke-width="8" stroke-linejoin="round"/><path d="M270,1062 L283,1078 L578,1078 L590,1068" fill="none" stroke="#005a1e" stroke-width="4.4" stroke-linejoin="round"/><path d="M270,1062 L283,1078 L578,1078 L590,1068" fill="none" stroke="#00f060" stroke-width="2" stroke-linejoin="round"/><path d="M441,1045 L462,1062 L490,1062" fill="none" stroke="#00f060" stroke-width="7" stroke-linejoin="round"/><path d="M441,1045 L462,1062 L490,1062" fill="none" stroke="#005a1e" stroke-width="3.4" stroke-linejoin="round"/><path d="M441,1045 L462,1062 L490,1062" fill="none" stroke="#00f060" stroke-width="1" stroke-linejoin="round"/><path d="M334.4,644 L334.4,675 L354.7,693.5 L354.7,770" fill="none" stroke="#00f060" stroke-width="1.4" stroke-linejoin="round"/><path d="M338 650 L345 644 L345 672 L360 686 L352 694 L338 680 Z" fill="#008a36"/><path d="M394,615 L400,621 L400,664 L372,692" fill="none" stroke="#00f060" stroke-width="8" stroke-linejoin="round"/><path d="M394,615 L400,621 L400,664 L372,692" fill="none" stroke="#005a1e" stroke-width="4.4" stroke-linejoin="round"/><path d="M394,615 L400,621 L400,664 L372,692" fill="none" stroke="#00f060" stroke-width="2" stroke-linejoin="round"/><path d="M392,668 L361,699 L361,818" fill="none" stroke="#00f060" stroke-width="8" stroke-linejoin="round"/><path d="M392,668 L361,699 L361,818" fill="none" stroke="#005a1e" stroke-width="4.4" stroke-linejoin="round"/><path d="M392,668 L361,699 L361,818" fill="none" stroke="#00f060" stroke-width="2" stroke-linejoin="round"/><path d="M381,668 L352,696 L352,700" fill="none" stroke="#00f060" stroke-width="7" stroke-linejoin="round"/><path d="M381,668 L352,696 L352,700" fill="none" stroke="#005a1e" stroke-width="3.4" stroke-linejoin="round"/><path d="M381,668 L352,696 L352,700" fill="none" stroke="#00f060" stroke-width="1" stroke-linejoin="round"/><path d="M366,668 L346,688" fill="none" stroke="#00f060" stroke-width="7" stroke-linejoin="round"/><path d="M366,668 L346,688" fill="none" stroke="#005a1e" stroke-width="3.4" stroke-linejoin="round"/><path d="M366,668 L346,688" fill="none" stroke="#00f060" stroke-width="1" stroke-linejoin="round"/><path d="M449,612 L449,631 L400,676 L386,688 L386,740" fill="none" stroke="#00f060" stroke-width="9" stroke-linejoin="round"/><path d="M449,612 L449,631 L400,676 L386,688 L386,740" fill="none" stroke="#005a1e" stroke-width="5.4" stroke-linejoin="round"/><path d="M449,612 L449,631 L400,676 L386,688 L386,740" fill="none" stroke="#00f060" stroke-width="3" stroke-linejoin="round"/><rect x="372" y="691.5" width="292" height="24.5" fill="#007a30" stroke="#00f060" stroke-width="1.6"/><rect x="373" y="697" width="9.0" height="14.7" fill="#000" /><rect x="388" y="697" width="22.0" height="14.7" fill="#00ff66" /><rect x="472" y="693" width="16" height="21" rx="4" fill="#007a30" stroke="#00f060" stroke-width="1.3"/><path d="M378,717.5 L475,717.5 L483,725 L720,725" fill="none" stroke="#00f060" stroke-width="5" stroke-linejoin="round"/><path d="M378,717.5 L475,717.5 L483,725 L720,725" fill="none" stroke="#00ad49" stroke-width="-1" stroke-linejoin="round"/><path d="M434.5,719 L450.6,732 L700,732" fill="none" stroke="#00f060" stroke-width="5" stroke-linejoin="round"/><path d="M434.5,719 L450.6,732 L700,732" fill="none" stroke="#00ad49" stroke-width="-1" stroke-linejoin="round"/><path d="M510,612 L510,622 L523,634 L545,634" fill="none" stroke="#00f060" stroke-width="9" stroke-linejoin="round"/><path d="M510,612 L510,622 L523,634 L545,634" fill="none" stroke="#005a1e" stroke-width="5.4" stroke-linejoin="round"/><path d="M510,612 L510,622 L523,634 L545,634" fill="none" stroke="#00f060" stroke-width="3" stroke-linejoin="round"/><path d="M603,612 L612,621 L612,634 L600,634" fill="none" stroke="#00f060" stroke-width="9" stroke-linejoin="round"/><path d="M603,612 L612,621 L612,634 L600,634" fill="none" stroke="#005a1e" stroke-width="5.4" stroke-linejoin="round"/><path d="M603,612 L612,621 L612,634 L600,634" fill="none" stroke="#00f060" stroke-width="3" stroke-linejoin="round"/><path d="M552,668 L552,690" fill="none" stroke="#00f060" stroke-width="7" stroke-linejoin="round"/><path d="M552,668 L552,690" fill="none" stroke="#005a1e" stroke-width="3.4" stroke-linejoin="round"/><path d="M552,668 L552,690" fill="none" stroke="#00f060" stroke-width="1" stroke-linejoin="round"/><path d="M592,668 L592,690" fill="none" stroke="#00f060" stroke-width="7" stroke-linejoin="round"/><path d="M592,668 L592,690" fill="none" stroke="#005a1e" stroke-width="3.4" stroke-linejoin="round"/><path d="M592,668 L592,690" fill="none" stroke="#00f060" stroke-width="1" stroke-linejoin="round"/><path d="M379.5,720 L408,759 L432,783 L463,783" fill="none" stroke="#00f060" stroke-width="8" stroke-linejoin="round"/><path d="M379.5,720 L408,759 L432,783 L463,783" fill="none" stroke="#005a1e" stroke-width="4.4" stroke-linejoin="round"/><path d="M379.5,720 L408,759 L432,783 L463,783" fill="none" stroke="#00f060" stroke-width="2" stroke-linejoin="round"/><path d="M411,853.7 L432,853.7 L447.7,869.5 L447.7,919.3 L458,929.8 L489.6,929.8" fill="none" stroke="#00f060" stroke-width="8" stroke-linejoin="round"/><path d="M411,853.7 L432,853.7 L447.7,869.5 L447.7,919.3 L458,929.8 L489.6,929.8" fill="none" stroke="#005a1e" stroke-width="4.4" stroke-linejoin="round"/><path d="M411,853.7 L432,853.7 L447.7,869.5 L447.7,919.3 L458,929.8 L489.6,929.8" fill="none" stroke="#00f060" stroke-width="2" stroke-linejoin="round"/><path d="M422.7,912 L422.7,931" fill="none" stroke="#00f060" stroke-width="6" stroke-linejoin="round"/><path d="M422.7,912 L422.7,931" fill="none" stroke="#004a18" stroke-width="2.4" stroke-linejoin="round"/><path d="M422.7,912 L422.7,931" fill="none" stroke="#007a30" stroke-width="0" stroke-linejoin="round"/><path d="M583,735 L541,775 L541,797 L447,889 L430,906" fill="none" stroke="#00f060" stroke-width="10" stroke-linejoin="round"/><path d="M583,735 L541,775 L541,797 L447,889 L430,906" fill="none" stroke="#004a18" stroke-width="6.4" stroke-linejoin="round"/><path d="M583,735 L541,775 L541,797 L447,889 L430,906" fill="none" stroke="#007a30" stroke-width="4" stroke-linejoin="round"/><path d="M600,746 L560,786 L560,805 L455,910 L360,966" fill="none" stroke="#00f060" stroke-width="8" stroke-linejoin="round"/><path d="M600,746 L560,786 L560,805 L455,910 L360,966" fill="none" stroke="#005a1e" stroke-width="4.4" stroke-linejoin="round"/><path d="M600,746 L560,786 L560,805 L455,910 L360,966" fill="none" stroke="#00f060" stroke-width="2" stroke-linejoin="round"/><path d="M605,760 L575,790 L575,815 L470,920 L442,979" fill="none" stroke="#00f060" stroke-width="7" stroke-linejoin="round"/><path d="M605,760 L575,790 L575,815 L470,920 L442,979" fill="none" stroke="#005a1e" stroke-width="3.4" stroke-linejoin="round"/><path d="M605,760 L575,790 L575,815 L470,920 L442,979" fill="none" stroke="#00f060" stroke-width="1" stroke-linejoin="round"/><path d="M566,878 L443,1001 L420,1006" fill="none" stroke="#00f060" stroke-width="10" stroke-linejoin="round"/><path d="M566,878 L443,1001 L420,1006" fill="none" stroke="#005a1e" stroke-width="6.4" stroke-linejoin="round"/><path d="M566,878 L443,1001 L420,1006" fill="none" stroke="#00f060" stroke-width="4" stroke-linejoin="round"/><path d="M504,933 L456,979 L431,979" fill="none" stroke="#00f060" stroke-width="7" stroke-linejoin="round"/><path d="M504,933 L456,979 L431,979" fill="none" stroke="#005a1e" stroke-width="3.4" stroke-linejoin="round"/><path d="M504,933 L456,979 L431,979" fill="none" stroke="#00f060" stroke-width="1" stroke-linejoin="round"/><path d="M440,880 L440,920 L458,940" fill="none" stroke="#00f060" stroke-width="6" stroke-linejoin="round"/><path d="M440,880 L440,920 L458,940" fill="none" stroke="#005a1e" stroke-width="2.4" stroke-linejoin="round"/><path d="M440,880 L440,920 L458,940" fill="none" stroke="#00f060" stroke-width="0" stroke-linejoin="round"/><path d="M420,767.7 L434.5,782.3 L458.7,782.3 L462,785.5 L489.4,785.5" fill="none" stroke="#00f060" stroke-width="8" stroke-linejoin="round"/><path d="M420,767.7 L434.5,782.3 L458.7,782.3 L462,785.5 L489.4,785.5" fill="none" stroke="#005a1e" stroke-width="4.4" stroke-linejoin="round"/><path d="M420,767.7 L434.5,782.3 L458.7,782.3 L462,785.5 L489.4,785.5" fill="none" stroke="#00f060" stroke-width="2" stroke-linejoin="round"/><path d="M453.9,732 L453.9,761.3 L462,769.4 L533,769.4 L541,775.8" fill="none" stroke="#00f060" stroke-width="1.4" stroke-linejoin="round"/><path d="M473.2,714.5 L484.5,724.2 L579.7,724.2 L583,729 L583,788.7 L602.3,808 L618.4,808" fill="none" stroke="#00f060" stroke-width="1.4" stroke-linejoin="round"/><path d="M621.6,800 L621.6,848.4 L634.5,861.3 L658.7,861.3" fill="none" stroke="#00f060" stroke-width="8" stroke-linejoin="round"/><path d="M621.6,800 L621.6,848.4 L634.5,861.3 L658.7,861.3" fill="none" stroke="#005a1e" stroke-width="4.4" stroke-linejoin="round"/><path d="M621.6,800 L621.6,848.4 L634.5,861.3 L658.7,861.3" fill="none" stroke="#00f060" stroke-width="2" stroke-linejoin="round"/><path d="M597,841 L720,841" fill="none" stroke="#00f060" stroke-width="9" stroke-linejoin="round"/><path d="M597,841 L720,841" fill="none" stroke="#004a18" stroke-width="5.4" stroke-linejoin="round"/><path d="M597,841 L720,841" fill="none" stroke="#007a30" stroke-width="3" stroke-linejoin="round"/><path d="M642.6,708 L662,727.4 L686,748.4 L700.6,761.3" fill="none" stroke="#00f060" stroke-width="8" stroke-linejoin="round"/><path d="M642.6,708 L662,727.4 L686,748.4 L700.6,761.3" fill="none" stroke="#004a18" stroke-width="4.4" stroke-linejoin="round"/><path d="M642.6,708 L662,727.4 L686,748.4 L700.6,761.3" fill="none" stroke="#007a30" stroke-width="2" stroke-linejoin="round"/><path d="M650,716 L672,738 L702,768" fill="none" stroke="#00f060" stroke-width="6" stroke-linejoin="round"/><path d="M650,716 L672,738 L702,768" fill="none" stroke="#004a18" stroke-width="2.4" stroke-linejoin="round"/><path d="M650,716 L672,738 L702,768" fill="none" stroke="#007a30" stroke-width="0" stroke-linejoin="round"/><path d="M585,740 L657.8,740 L686.8,766.5" fill="none" stroke="#00f060" stroke-width="6" stroke-linejoin="round"/><path d="M585,740 L657.8,740 L686.8,766.5" fill="none" stroke="#005a1e" stroke-width="2.4" stroke-linejoin="round"/><path d="M585,740 L657.8,740 L686.8,766.5" fill="none" stroke="#00f060" stroke-width="0" stroke-linejoin="round"/><path d="M686.8,770 L640,808 L604,833 L590,834" fill="none" stroke="#00f060" stroke-width="7" stroke-linejoin="round"/><path d="M686.8,770 L640,808 L604,833 L590,834" fill="none" stroke="#005a1e" stroke-width="3.4" stroke-linejoin="round"/><path d="M686.8,770 L640,808 L604,833 L590,834" fill="none" stroke="#00f060" stroke-width="1" stroke-linejoin="round"/><path d="M700,820 L654,866 L640,872" fill="none" stroke="#00f060" stroke-width="6" stroke-linejoin="round"/><path d="M700,820 L654,866 L640,872" fill="none" stroke="#005a1e" stroke-width="2.4" stroke-linejoin="round"/><path d="M700,820 L654,866 L640,872" fill="none" stroke="#00f060" stroke-width="0" stroke-linejoin="round"/><path d="M455,734.5 L720,734.5" fill="none" stroke="#00f060" stroke-width="4" stroke-linejoin="round"/><path d="M455,734.5 L720,734.5" fill="none" stroke="#00ad49" stroke-width="-2" stroke-linejoin="round"/><path d="M612,738 L622,752" fill="none" stroke="#00f060" stroke-width="4" stroke-linejoin="round"/><path d="M612,738 L622,752" fill="none" stroke="#005a1e" stroke-width="0.3999999999999999" stroke-linejoin="round"/><path d="M612,738 L622,752" fill="none" stroke="#00f060" stroke-width="-2" stroke-linejoin="round"/><path d="M663,612 L669,576 L797,576 L809,588" fill="none" stroke="#00f060" stroke-width="7" stroke-linejoin="round"/><path d="M663,612 L669,576 L797,576 L809,588" fill="none" stroke="#005a1e" stroke-width="3.4" stroke-linejoin="round"/><path d="M663,612 L669,576 L797,576 L809,588" fill="none" stroke="#00f060" stroke-width="1" stroke-linejoin="round"/><path d="M707,603 L672.2,637.2 L672.2,718 L700,745" fill="none" stroke="#00f060" stroke-width="8" stroke-linejoin="round"/><path d="M707,603 L672.2,637.2 L672.2,718 L700,745" fill="none" stroke="#005a1e" stroke-width="4.4" stroke-linejoin="round"/><path d="M707,603 L672.2,637.2 L672.2,718 L700,745" fill="none" stroke="#00f060" stroke-width="2" stroke-linejoin="round"/><path d="M746.8,611.5 L746.8,620.5 L723.6,642.3 L696.6,642.3 L695.3,647.5 L695.3,664.2" fill="none" stroke="#00f060" stroke-width="8" stroke-linejoin="round"/><path d="M746.8,611.5 L746.8,620.5 L723.6,642.3 L696.6,642.3 L695.3,647.5 L695.3,664.2" fill="none" stroke="#005a1e" stroke-width="4.4" stroke-linejoin="round"/><path d="M746.8,611.5 L746.8,620.5 L723.6,642.3 L696.6,642.3 L695.3,647.5 L695.3,664.2" fill="none" stroke="#00f060" stroke-width="2" stroke-linejoin="round"/><path d="M806,611.5 L806,629.5 L777.6,657.8 L777.6,664.2" fill="none" stroke="#00f060" stroke-width="8" stroke-linejoin="round"/><path d="M806,611.5 L806,629.5 L777.6,657.8 L777.6,664.2" fill="none" stroke="#005a1e" stroke-width="4.4" stroke-linejoin="round"/><path d="M806,611.5 L806,629.5 L777.6,657.8 L777.6,664.2" fill="none" stroke="#00f060" stroke-width="2" stroke-linejoin="round"/><path d="M837,611 L837,667" fill="none" stroke="#00f060" stroke-width="7" stroke-linejoin="round"/><path d="M837,611 L837,667" fill="none" stroke="#005a1e" stroke-width="3.4" stroke-linejoin="round"/><path d="M837,611 L837,667" fill="none" stroke="#00f060" stroke-width="1" stroke-linejoin="round"/><path d="M868,611 L868,637 L842,666" fill="none" stroke="#00f060" stroke-width="7" stroke-linejoin="round"/><path d="M868,611 L868,637 L842,666" fill="none" stroke="#005a1e" stroke-width="3.4" stroke-linejoin="round"/><path d="M868,611 L868,637 L842,666" fill="none" stroke="#00f060" stroke-width="1" stroke-linejoin="round"/><path d="M759,675 L768,675" fill="none" stroke="#00f060" stroke-width="5" stroke-linejoin="round"/><path d="M759,675 L768,675" fill="none" stroke="#005a1e" stroke-width="1.4" stroke-linejoin="round"/><path d="M759,675 L768,675" fill="none" stroke="#00f060" stroke-width="-1" stroke-linejoin="round"/><path d="M648.4,713.5 L706.8,754.4" fill="none" stroke="#00f060" stroke-width="7" stroke-linejoin="round"/><path d="M648.4,713.5 L706.8,754.4" fill="none" stroke="#004a18" stroke-width="3.4" stroke-linejoin="round"/><path d="M648.4,713.5 L706.8,754.4" fill="none" stroke="#007a30" stroke-width="1" stroke-linejoin="round"/><path d="M653.0 724 L700 764.0" stroke="#000" stroke-width="1.6" fill="none"/><path d="M654.5 729 L700 768.5" stroke="#000" stroke-width="1.6" fill="none"/><path d="M656.0 734 L700 773.0" stroke="#000" stroke-width="1.6" fill="none"/><path d="M657.5 739 L700 777.5" stroke="#000" stroke-width="1.6" fill="none"/><path d="M706 695 L720 712 L735 722 L738 712 L742 705 L752 712 L760 700 L770 715 L775 722 L760 724 H712 Z" fill="#000"/><path d="M660.6,694 L702,694 L724,712" fill="none" stroke="#00f060" stroke-width="6" stroke-linejoin="round"/><path d="M660.6,694 L702,694 L724,712" fill="none" stroke="#005a1e" stroke-width="2.4" stroke-linejoin="round"/><path d="M660.6,694 L702,694 L724,712" fill="none" stroke="#00f060" stroke-width="0" stroke-linejoin="round"/><path d="M675.5,690 L675.5,718 L700,745" fill="none" stroke="#00f060" stroke-width="6" stroke-linejoin="round"/><path d="M675.5,690 L675.5,718 L700,745" fill="none" stroke="#005a1e" stroke-width="2.4" stroke-linejoin="round"/><path d="M675.5,690 L675.5,718 L700,745" fill="none" stroke="#00f060" stroke-width="0" stroke-linejoin="round"/><path d="M694,690 L694,705 L712,722" fill="none" stroke="#00f060" stroke-width="6" stroke-linejoin="round"/><path d="M694,690 L694,705 L712,722" fill="none" stroke="#005a1e" stroke-width="2.4" stroke-linejoin="round"/><path d="M694,690 L694,705 L712,722" fill="none" stroke="#00f060" stroke-width="0" stroke-linejoin="round"/><path d="M791,722.6 L811.6,705.8 L880,705.8" fill="none" stroke="#00f060" stroke-width="7" stroke-linejoin="round"/><path d="M791,722.6 L811.6,705.8 L880,705.8" fill="none" stroke="#005a1e" stroke-width="3.4" stroke-linejoin="round"/><path d="M791,722.6 L811.6,705.8 L880,705.8" fill="none" stroke="#00f060" stroke-width="1" stroke-linejoin="round"/><path d="M800,738 L830,718 L880,718" fill="none" stroke="#00f060" stroke-width="6" stroke-linejoin="round"/><path d="M800,738 L830,718 L880,718" fill="none" stroke="#005a1e" stroke-width="2.4" stroke-linejoin="round"/><path d="M800,738 L830,718 L880,718" fill="none" stroke="#00f060" stroke-width="0" stroke-linejoin="round"/><path d="M809,760 L822,768 L836,768" fill="none" stroke="#00f060" stroke-width="5" stroke-linejoin="round"/><path d="M809,760 L822,768 L836,768" fill="none" stroke="#005a1e" stroke-width="1.4" stroke-linejoin="round"/><path d="M809,760 L822,768 L836,768" fill="none" stroke="#00f060" stroke-width="-1" stroke-linejoin="round"/><path d="M809,790 L820,800 L836,800" fill="none" stroke="#00f060" stroke-width="5" stroke-linejoin="round"/><path d="M809,790 L820,800 L836,800" fill="none" stroke="#005a1e" stroke-width="1.4" stroke-linejoin="round"/><path d="M809,790 L820,800 L836,800" fill="none" stroke="#00f060" stroke-width="-1" stroke-linejoin="round"/><path d="M700,830 L690,845 L655,845" fill="none" stroke="#00f060" stroke-width="6" stroke-linejoin="round"/><path d="M700,830 L690,845 L655,845" fill="none" stroke="#005a1e" stroke-width="2.4" stroke-linejoin="round"/><path d="M700,830 L690,845 L655,845" fill="none" stroke="#00f060" stroke-width="0" stroke-linejoin="round"/><path d="M740,832 L740,860 L780,880" fill="none" stroke="#00f060" stroke-width="6" stroke-linejoin="round"/><path d="M740,832 L740,860 L780,880" fill="none" stroke="#005a1e" stroke-width="2.4" stroke-linejoin="round"/><path d="M740,832 L740,860 L780,880" fill="none" stroke="#00f060" stroke-width="0" stroke-linejoin="round"/><path d="M770,832 L770,850 L810,870 L835,870" fill="none" stroke="#00f060" stroke-width="6" stroke-linejoin="round"/><path d="M770,832 L770,850 L810,870 L835,870" fill="none" stroke="#005a1e" stroke-width="2.4" stroke-linejoin="round"/><path d="M770,832 L770,850 L810,870 L835,870" fill="none" stroke="#00f060" stroke-width="0" stroke-linejoin="round"/><path d="M917,681 L896.5,704.7 L830,704.7" fill="none" stroke="#00f060" stroke-width="8" stroke-linejoin="round"/><path d="M917,681 L896.5,704.7 L830,704.7" fill="none" stroke="#005a1e" stroke-width="4.4" stroke-linejoin="round"/><path d="M917,681 L896.5,704.7 L830,704.7" fill="none" stroke="#00f060" stroke-width="2" stroke-linejoin="round"/><path d="M790 717.5 L962 717.5 L1011 666.5 L1052 666.5 L1065 679.5 L1065 742 L1080 758 L1101 768" fill="none" stroke="#00f060" stroke-width="17" stroke-linejoin="round"/><path d="M790 717.5 L962 717.5 L1011 666.5 L1052 666.5 L1065 679.5 L1065 742 L1080 758 L1101 768" fill="none" stroke="#00ad49" stroke-width="14" stroke-linejoin="round"/><path d="M790 717.5 L962 717.5 L1011 666.5 L1052 666.5 L1065 679.5 L1065 742 L1080 758 L1101 768" fill="none" stroke="#00f060" stroke-width="11" stroke-linejoin="round"/><path d="M790 717.5 L962 717.5 L1011 666.5 L1052 666.5 L1065 679.5 L1065 742 L1080 758 L1101 768" fill="none" stroke="#007a30" stroke-width="6" stroke-linejoin="round"/><path d="M949,740 L1054,740" fill="none" stroke="#00f060" stroke-width="1.4" stroke-linejoin="round"/><path d="M1127,707.7 L1150.6,707.7 L1150.6,840" fill="none" stroke="#2fe596" stroke-width="1.5" stroke-linejoin="round"/><path d="M1050,707.7 L1077.6,707.7" fill="none" stroke="#2fe596" stroke-width="1.5" stroke-linejoin="round"/><path d="M806,760 L1004,760" fill="none" stroke="#00f060" stroke-width="4" stroke-linejoin="round"/><path d="M806,760 L1004,760" fill="none" stroke="#00ad49" stroke-width="-2" stroke-linejoin="round"/><path d="M806,771 L1004,771" fill="none" stroke="#00f060" stroke-width="4" stroke-linejoin="round"/><path d="M806,771 L1004,771" fill="none" stroke="#00ad49" stroke-width="-2" stroke-linejoin="round"/><path d="M977 771 L1004 752 L1004 830 L977 812 Z" fill="#007a30"/><path d="M1027 752 L1033 752 L1040 760 H1072 L1078 768 L1068 780 H1027 Z" fill="#007a30"/><path d="M1026,760 L1072,760 L1085,762 L1101,762" fill="none" stroke="#00f060" stroke-width="8" stroke-linejoin="round"/><path d="M1026,760 L1072,760 L1085,762 L1101,762" fill="none" stroke="#000" stroke-width="4.4" stroke-linejoin="round"/><path d="M1026,760 L1072,760 L1085,762 L1101,762" fill="none" stroke="#000" stroke-width="2" stroke-linejoin="round"/><path d="M1026,778 L1068,778 L1085,775 L1101,775" fill="none" stroke="#00f060" stroke-width="7" stroke-linejoin="round"/><path d="M1026,778 L1068,778 L1085,775 L1101,775" fill="none" stroke="#000" stroke-width="3.4" stroke-linejoin="round"/><path d="M1026,778 L1068,778 L1085,775 L1101,775" fill="none" stroke="#000" stroke-width="1" stroke-linejoin="round"/><path d="M1026,800 L1050,800 L1070,815 L1070,840" fill="none" stroke="#00f060" stroke-width="7" stroke-linejoin="round"/><path d="M1026,800 L1050,800 L1070,815 L1070,840" fill="none" stroke="#004a18" stroke-width="3.4" stroke-linejoin="round"/><path d="M1026,800 L1050,800 L1070,815 L1070,840" fill="none" stroke="#007a30" stroke-width="1" stroke-linejoin="round"/><path d="M663,820 L663,900" fill="none" stroke="#00f060" stroke-width="12" stroke-linejoin="round"/><path d="M663,820 L663,900" fill="none" stroke="#004a18" stroke-width="8.4" stroke-linejoin="round"/><path d="M663,820 L663,900" fill="none" stroke="#007a30" stroke-width="6" stroke-linejoin="round"/><path d="M684,820 L684,895 L760,970" fill="none" stroke="#00f060" stroke-width="14" stroke-linejoin="round"/><path d="M684,820 L684,895 L760,970" fill="none" stroke="#004a18" stroke-width="10.4" stroke-linejoin="round"/><path d="M684,820 L684,895 L760,970" fill="none" stroke="#007a30" stroke-width="8" stroke-linejoin="round"/><rect x="753.5" y="954" width="11.5" height="18.0" fill="#000" /><path d="M639.6,910.5 L639.6,971.8 L657,989" fill="none" stroke="#00f060" stroke-width="1.4" stroke-linejoin="round"/><path d="M641 912 L652 905 L652 960 L665 985 L645 975 Z" fill="#007a30"/><path d="M590,995.2 L747.7,995.2 L753,1001" fill="none" stroke="#00f060" stroke-width="9" stroke-linejoin="round"/><path d="M590,995.2 L747.7,995.2 L753,1001" fill="none" stroke="#005a1e" stroke-width="5.4" stroke-linejoin="round"/><path d="M590,995.2 L747.7,995.2 L753,1001" fill="none" stroke="#00f060" stroke-width="3" stroke-linejoin="round"/><path d="M718.5,1001 L718.5,1060 L722,1064" fill="none" stroke="#00f060" stroke-width="7" stroke-linejoin="round"/><path d="M718.5,1001 L718.5,1060 L722,1064" fill="none" stroke="#005a1e" stroke-width="3.4" stroke-linejoin="round"/><path d="M718.5,1001 L718.5,1060 L722,1064" fill="none" stroke="#00f060" stroke-width="1" stroke-linejoin="round"/><path d="M794.4,858 L812,858 L835,890 L835,893" fill="none" stroke="#00f060" stroke-width="1.4" stroke-linejoin="round"/><path d="M762,910.5 L899.5,910.5 L908,901.8" fill="none" stroke="#00f060" stroke-width="1.4" stroke-linejoin="round"/><path d="M762,939.7 L940.4,939.7 L947.7,932.4 L947.7,910.5" fill="none" stroke="#00f060" stroke-width="1.4" stroke-linejoin="round"/><path d="M765,966 L905,966 L942,1003 L942,1045 L930,1052" fill="none" stroke="#00f060" stroke-width="15" stroke-linejoin="round"/><path d="M765,966 L905,966 L942,1003 L942,1045 L930,1052" fill="none" stroke="#004a18" stroke-width="11.4" stroke-linejoin="round"/><path d="M765,966 L905,966 L942,1003 L942,1045 L930,1052" fill="none" stroke="#007a30" stroke-width="9" stroke-linejoin="round"/><path d="M864.5,820 L864.5,848" fill="none" stroke="#00f060" stroke-width="6" stroke-linejoin="round"/><path d="M864.5,820 L864.5,848" fill="none" stroke="#005a1e" stroke-width="2.4" stroke-linejoin="round"/><path d="M864.5,820 L864.5,848" fill="none" stroke="#00f060" stroke-width="0" stroke-linejoin="round"/><path d="M908,855 L972.5,855 L987,840.4 L1028,840.4" fill="none" stroke="#00f060" stroke-width="4" stroke-linejoin="round"/><path d="M908,855 L972.5,855 L987,840.4 L1028,840.4" fill="none" stroke="#005a1e" stroke-width="0.3999999999999999" stroke-linejoin="round"/><path d="M908,855 L972.5,855 L987,840.4 L1028,840.4" fill="none" stroke="#00f060" stroke-width="-2" stroke-linejoin="round"/><path d="M1054,731 L1136,731 L1156,751 L1156,1018.5 L1147.6,1024.4 L1039.6,1024.4" fill="none" stroke="#00f060" stroke-width="1.5" stroke-linejoin="round"/><path d="M1057,1011 L1096.6,1011 L1120,989.3 L1120,820 L1096,800 L1054,800" fill="none" stroke="#00f060" stroke-width="1.5" stroke-linejoin="round"/><path d="M1136,904.7 L1136,1071 L1048.4,1071" fill="none" stroke="#2fe596" stroke-width="1.5" stroke-linejoin="round"/><path d="M1054,871 L1080,871" fill="none" stroke="#2fe596" stroke-width="1.5" stroke-linejoin="round"/><path d="M1124,871 L1147.6,871" fill="none" stroke="#2fe596" stroke-width="1.5" stroke-linejoin="round"/><path d="M1061,906.5 L1136.8,906.5" fill="none" stroke="#2fe596" stroke-width="1.5" stroke-linejoin="round"/><path d="M1058.4 850 L1058.4 879 L1042.4 893.4 L1019.2 893.4 L1005.4 908 L1005.4 980.5 L1023.6 998 L1040 998" fill="none" stroke="#00f060" stroke-width="15" stroke-linejoin="round"/><path d="M1058.4 850 L1058.4 879 L1042.4 893.4 L1019.2 893.4 L1005.4 908 L1005.4 980.5 L1023.6 998 L1040 998" fill="none" stroke="#00ad49" stroke-width="12" stroke-linejoin="round"/><path d="M1058.4 850 L1058.4 879 L1042.4 893.4 L1019.2 893.4 L1005.4 908 L1005.4 980.5 L1023.6 998 L1040 998" fill="none" stroke="#007a30" stroke-width="6" stroke-linejoin="round"/><path d="M1055.5,903.6 L1067,915 L1073,919.5 L1073,973.3 L1067,976.2 L1058.4,976.2" fill="none" stroke="#00f060" stroke-width="7" stroke-linejoin="round"/><path d="M1055.5,903.6 L1067,915 L1073,919.5 L1073,973.3 L1067,976.2 L1058.4,976.2" fill="none" stroke="#005a1e" stroke-width="3.4" stroke-linejoin="round"/><path d="M1055.5,903.6 L1067,915 L1073,919.5 L1073,973.3 L1067,976.2 L1058.4,976.2" fill="none" stroke="#00f060" stroke-width="1" stroke-linejoin="round"/><path d="M1056,829 L1056,903" fill="none" stroke="#00f060" stroke-width="7" stroke-linejoin="round"/><path d="M1056,829 L1056,903" fill="none" stroke="#000" stroke-width="3.4" stroke-linejoin="round"/><path d="M1056,829 L1056,903" fill="none" stroke="#000" stroke-width="1" stroke-linejoin="round"/><rect x="1036" y="965" width="22.0" height="5.0" fill="#007a30" /><rect x="1036" y="980.5" width="22.0" height="4.5" fill="#007a30" /><rect x="1036" y="995" width="22.0" height="4.4" fill="#007a30" /><rect x="1036" y="1009.6" width="22.0" height="4.4" fill="#007a30" /><path d="M213,1043.5 L253,1043.5" fill="none" stroke="#2fe596" stroke-width="1.5" stroke-linejoin="round"/><path d="M213,1068.5 L253,1068.5" fill="none" stroke="#2fe596" stroke-width="1.5" stroke-linejoin="round"/><path d="M221.5,1043.5 L221.5,1068.5" fill="none" stroke="#2fe596" stroke-width="1.5" stroke-linejoin="round"/><path d="M560,1005 L560,995" fill="none" stroke="#00f060" stroke-width="6" stroke-linejoin="round"/><path d="M560,1005 L560,995" fill="none" stroke="#005a1e" stroke-width="2.4" stroke-linejoin="round"/><path d="M560,1005 L560,995" fill="none" stroke="#00f060" stroke-width="0" stroke-linejoin="round"/><path d="M1054,731 L1136,731 L1156,751 L1156,1018 L1148,1026 L1042,1026" fill="none" stroke="#00f060" stroke-width="1.5" stroke-linejoin="round"/><path d="M1059,1012 L1096,1012 L1120,988 L1120,820 L1096,800 L1054,800" fill="none" stroke="#00f060" stroke-width="1.5" stroke-linejoin="round"/><path d="M1136,880 L1136,1075 L1110,1075" fill="none" stroke="#2fe596" stroke-width="1.5" stroke-linejoin="round"/><path d="M1149,708 L1151,725 L1151,760" fill="none" stroke="#2fe596" stroke-width="1.5" stroke-linejoin="round"/><path d="M905,838 L945,805 L1040,805" fill="none" stroke="#00f060" stroke-width="1.3" stroke-linejoin="round"/><rect x="135.5" y="566" width="185" height="184" fill="none" stroke="#2fe596" stroke-width="3"/><path d="M181 1068 V655 L193 642 H216 L228 655 V1068" fill="none" stroke="#00f060" stroke-width="1.3"/><path d="M184 1068 V657 L195 646 H214 L225 657 V1068" fill="none" stroke="#00f060" stroke-width="1"/><path d="M237 1068 V655 L249 642 H268 L280 655 V1068" fill="none" stroke="#00f060" stroke-width="1.3"/><path d="M240 1068 V657 L251 646 H266 L277 657 V1068" fill="none" stroke="#00f060" stroke-width="1"/><rect x="184.6" y="849" width="93.4" height="46" rx="7" fill="none" stroke="#2fe596" stroke-width="3"/><rect x="184.6" y="919.4" width="93.4" height="44.39999999999998" rx="7" fill="none" stroke="#2fe596" stroke-width="3"/><rect x="188" y="985" width="93.60000000000002" height="45.5" rx="7" fill="none" stroke="#2fe596" stroke-width="3"/><rect x="187" y="780" width="92" height="46" rx="7" fill="none" stroke="#2fe596" stroke-width="3"/><path d="M79 752 V900 M79 752 H153 V900 H79" fill="none" stroke="#2fb0c0" stroke-width="1.6"/><path d="M87 759 H153 L178 778 V800 M87 759 V895 L110 900" fill="none" stroke="#00f060" stroke-width="1.3"/><rect x="378" y="787" width="53" height="31" fill="none" stroke="#2fe596" stroke-width="1.6"/><rect x="378.7" y="864.4" width="54" height="29" fill="none" stroke="#2fe596" stroke-width="1.6"/><rect x="378.7" y="940" width="54" height="28" fill="none" stroke="#2fe596" stroke-width="1.6"/><rect x="562" y="625.6" width="24" height="52" fill="none" stroke="#2fe596" stroke-width="1.6"/><rect x="905" y="738.6" width="41" height="69" rx="6" fill="none" stroke="#2fe596" stroke-width="3"/><rect x="505" y="822" width="85" height="42" fill="none" stroke="#2fe596" stroke-width="1.5"/><path d="M815 1020 L800 1031 L815 1042 M815 1049 L800 1060 L815 1071" fill="none" stroke="#2fe596" stroke-width="1.5"/><circle cx="617.4" cy="776.9" r="42.5" fill="none" stroke="#2fe596" stroke-width="3.2"/><circle cx="589" cy="955.6" r="42.5" fill="none" stroke="#2fe596" stroke-width="3.2"/><circle cx="673.2" cy="954.5" r="42.5" fill="none" stroke="#2fe596" stroke-width="3.2"/><circle cx="940.2" cy="662.9" r="42.5" fill="none" stroke="#2fe596" stroke-width="3.2"/><circle cx="418.5" cy="1032.8" r="42.5" fill="none" stroke="#2fe596" stroke-width="3.2"/><circle cx="980.6" cy="1041" r="42.5" fill="none" stroke="#2fe596" stroke-width="3.2"/><rect x="191" y="648" width="22.0" height="20.0" fill="#00ff66" /><rect x="242" y="648" width="23.0" height="20.0" fill="#00ff66" /><rect x="338.25" y="605.75" width="24.5" height="23.5" fill="#00ff66" stroke="#2fe596" stroke-width="1.5"/><rect x="338.25" y="642.75" width="24.5" height="22.5" fill="#00ff66" stroke="#2fe596" stroke-width="1.5"/><rect x="367.75" y="605.75" width="24.5" height="23.5" fill="#00ff66" stroke="#2fe596" stroke-width="1.5"/><rect x="367.75" y="642.75" width="24.5" height="22.5" fill="#00ff66" stroke="#2fe596" stroke-width="1.5"/><rect x="87" y="761" width="57.5" height="39.6" fill="#00ff66" /><rect x="86.4" y="852.7" width="58.4" height="38.6" fill="#00ff66" /><rect x="158.75" y="832.75" width="20.5" height="16.5" fill="#00ff66" stroke="#2fe596" stroke-width="1.5"/><rect x="158.75" y="801.75" width="20.5" height="18.5" fill="#00ff66" stroke="#2fe596" stroke-width="1.5"/><rect x="188" y="783" width="38.0" height="38.0" fill="#00ff66" /><rect x="239" y="783.6" width="34.0" height="37.4" fill="#00ff66" /><rect x="189" y="852.7" width="35.0" height="37.3" fill="#00ff66" /><rect x="239.5" y="852.7" width="34.0" height="37.3" fill="#00ff66" /><rect x="189" y="923" width="35.0" height="37.0" fill="#00ff66" /><rect x="239.5" y="923" width="34.0" height="37.0" fill="#00ff66" /><rect x="193" y="989" width="34.0" height="37.0" fill="#00ff66" /><rect x="243" y="989" width="34.0" height="37.0" fill="#00ff66" /><rect x="196" y="1047" width="22.5" height="20.0" fill="#00ff66" /><rect x="247.7" y="1045.7" width="22.3" height="21.3" fill="#00ff66" /><rect x="291.75" y="959.75" width="24.2" height="24.5" fill="#00ff66" stroke="#2fe596" stroke-width="1.5"/><rect x="291.75" y="990.25" width="24.2" height="23.0" fill="#00ff66" stroke="#2fe596" stroke-width="1.5"/><rect x="322.15" y="959.75" width="24.1" height="24.5" fill="#00ff66" stroke="#2fe596" stroke-width="1.5"/><rect x="322.15" y="990.25" width="24.1" height="23.0" fill="#00ff66" stroke="#2fe596" stroke-width="1.5"/><rect x="378.75" y="739.25" width="15.5" height="21.0" fill="#00ff66" stroke="#2fe596" stroke-width="1.5"/><rect x="414.75" y="739.25" width="12.5" height="21.0" fill="#00ff66" stroke="#2fe596" stroke-width="1.5"/><rect x="397.75" y="768.75" width="15.5" height="23.2" fill="#00ff66" stroke="#2fe596" stroke-width="1.5"/><rect x="382.25" y="813.75" width="13.0" height="15.5" fill="#00ff66" stroke="#2fe596" stroke-width="1.5"/><rect x="415.75" y="813.75" width="14.5" height="15.5" fill="#00ff66" stroke="#2fe596" stroke-width="1.5"/><rect x="399.35" y="847.75" width="12.5" height="20.5" fill="#00ff66" stroke="#2fe596" stroke-width="1.5"/><rect x="382.75" y="890.75" width="12.5" height="20.5" fill="#00ff66" stroke="#2fe596" stroke-width="1.5"/><rect x="416.75" y="890.75" width="12.5" height="20.5" fill="#00ff66" stroke="#2fe596" stroke-width="1.5"/><rect x="400.75" y="923.75" width="11.1" height="17.1" fill="#00ff66" stroke="#2fe596" stroke-width="1.5"/><rect x="382.75" y="965.75" width="12.5" height="19.5" fill="#00ff66" stroke="#2fe596" stroke-width="1.5"/><rect x="416.75" y="965.75" width="12.5" height="19.5" fill="#00ff66" stroke="#2fe596" stroke-width="1.5"/><rect x="436.35" y="588.25" width="24.5" height="22.6" fill="#00ff66" stroke="#2fe596" stroke-width="1.5"/><rect x="466.75" y="588.25" width="24.5" height="22.6" fill="#00ff66" stroke="#2fe596" stroke-width="1.5"/><rect x="501.75" y="588.25" width="17.5" height="22.6" fill="#00ff66" stroke="#2fe596" stroke-width="1.5"/><rect x="532.35" y="588.25" width="18.9" height="22.6" fill="#00ff66" stroke="#2fe596" stroke-width="1.5"/><rect x="563.75" y="588.25" width="19.0" height="22.6" fill="#00ff66" stroke="#2fe596" stroke-width="1.5"/><rect x="595.75" y="588.25" width="16.5" height="22.6" fill="#00ff66" stroke="#2fe596" stroke-width="1.5"/><rect x="623.75" y="588.25" width="24.5" height="22.6" fill="#00ff66" stroke="#2fe596" stroke-width="1.5"/><rect x="654.25" y="588.25" width="23.3" height="22.6" fill="#00ff66" stroke="#2fe596" stroke-width="1.5"/><rect x="707.25" y="588.25" width="17.7" height="22.6" fill="#00ff66" stroke="#2fe596" stroke-width="1.5"/><rect x="737.75" y="588.25" width="17.5" height="22.6" fill="#00ff66" stroke="#2fe596" stroke-width="1.5"/><rect x="766.75" y="588.25" width="19.2" height="22.6" fill="#00ff66" stroke="#2fe596" stroke-width="1.5"/><rect x="797.55" y="588.25" width="18.7" height="22.6" fill="#00ff66" stroke="#2fe596" stroke-width="1.5"/><rect x="826.75" y="588.25" width="19.0" height="22.6" fill="#00ff66" stroke="#2fe596" stroke-width="1.5"/><rect x="858.55" y="588.25" width="18.7" height="22.6" fill="#00ff66" stroke="#2fe596" stroke-width="1.5"/><rect x="544" y="629" width="16" height="8" rx="4" fill="#00ff66"/><rect x="588" y="629" width="18" height="8" rx="4" fill="#00ff66"/><rect x="543" y="647" width="17" height="8" rx="4" fill="#00ff66"/><rect x="542" y="663" width="18" height="9" rx="4" fill="#00ff66"/><rect x="588" y="663" width="17" height="9" rx="4" fill="#00ff66"/><rect x="486.05" y="689.55" width="23.2" height="24.5" fill="#00ff66" stroke="#2fe596" stroke-width="1.5"/><rect x="516.55" y="689.55" width="23.3" height="24.5" fill="#00ff66" stroke="#2fe596" stroke-width="1.5"/><rect x="546.75" y="689.55" width="23.5" height="24.5" fill="#00ff66" stroke="#2fe596" stroke-width="1.5"/><rect x="576.35" y="689.55" width="23.3" height="24.5" fill="#00ff66" stroke="#2fe596" stroke-width="1.5"/><rect x="611.35" y="689.55" width="18.9" height="24.5" fill="#00ff66" stroke="#2fe596" stroke-width="1.5"/><rect x="641.75" y="689.55" width="18.9" height="24.5" fill="#00ff66" stroke="#2fe596" stroke-width="1.5"/><rect x="685.15" y="664.95" width="22.3" height="20.3" fill="#00ff66" stroke="#2fe596" stroke-width="1.5"/><rect x="737.25" y="664.95" width="21.6" height="20.3" fill="#00ff66" stroke="#2fe596" stroke-width="1.5"/><rect x="768.15" y="664.95" width="21.1" height="20.3" fill="#00ff66" stroke="#2fe596" stroke-width="1.5"/><rect x="818.75" y="664.95" width="22.5" height="20.3" fill="#00ff66" stroke="#2fe596" stroke-width="1.5"/><rect x="463.45" y="745.75" width="23.4" height="21.5" fill="#00ff66" stroke="#2fe596" stroke-width="1.5"/><rect x="463.45" y="776.45" width="23.4" height="19.8" fill="#00ff66" stroke="#2fe596" stroke-width="1.5"/><rect x="500.75" y="739.75" width="34.5" height="27.5" fill="#00ff66" stroke="#2fe596" stroke-width="1.5"/><rect x="500.75" y="773.75" width="34.5" height="31.5" fill="#00ff66" stroke="#2fe596" stroke-width="1.5"/><rect x="496.6" y="823.5" width="35.1" height="35.1" fill="#00ff66" /><rect x="547" y="823.5" width="32.7" height="35.1" fill="#00ff66" /><rect x="503.25" y="872.15" width="32.4" height="29.0" fill="#00ff66" stroke="#2fe596" stroke-width="1.5"/><rect x="503.25" y="908.45" width="32.4" height="26.6" fill="#00ff66" stroke="#2fe596" stroke-width="1.5"/><rect x="469.35" y="880.35" width="22.9" height="19.6" fill="#00ff66" stroke="#2fe596" stroke-width="1.5"/><rect x="469.35" y="910.75" width="22.9" height="18.5" fill="#00ff66" stroke="#2fe596" stroke-width="1.5"/><rect x="491.55" y="1021.75" width="20.7" height="22.0" fill="#00ff66" stroke="#2fe596" stroke-width="1.5"/><rect x="491.55" y="1051.15" width="20.7" height="21.8" fill="#00ff66" stroke="#2fe596" stroke-width="1.5"/><rect x="518.45" y="1021.75" width="21.8" height="22.0" fill="#00ff66" stroke="#2fe596" stroke-width="1.5"/><rect x="518.45" y="1051.15" width="21.8" height="21.8" fill="#00ff66" stroke="#2fe596" stroke-width="1.5"/><rect x="548.75" y="1021.75" width="20.8" height="22.0" fill="#00ff66" stroke="#2fe596" stroke-width="1.5"/><rect x="548.75" y="1051.15" width="20.8" height="21.8" fill="#00ff66" stroke="#2fe596" stroke-width="1.5"/><rect x="576.75" y="1021.75" width="22.1" height="22.0" fill="#00ff66" stroke="#2fe596" stroke-width="1.5"/><rect x="576.75" y="1051.15" width="22.1" height="21.8" fill="#00ff66" stroke="#2fe596" stroke-width="1.5"/><rect x="606.15" y="1021.75" width="21.9" height="22.0" fill="#00ff66" stroke="#2fe596" stroke-width="1.5"/><rect x="606.15" y="1051.15" width="21.9" height="21.8" fill="#00ff66" stroke="#2fe596" stroke-width="1.5"/><rect x="635.35" y="1021.75" width="20.7" height="22.0" fill="#00ff66" stroke="#2fe596" stroke-width="1.5"/><rect x="635.35" y="1051.15" width="20.7" height="21.8" fill="#00ff66" stroke="#2fe596" stroke-width="1.5"/><rect x="664.65" y="1021.75" width="20.6" height="22.0" fill="#00ff66" stroke="#2fe596" stroke-width="1.5"/><rect x="664.65" y="1051.15" width="20.6" height="21.8" fill="#00ff66" stroke="#2fe596" stroke-width="1.5"/><rect x="692.75" y="1021.75" width="20.5" height="22.0" fill="#00ff66" stroke="#2fe596" stroke-width="1.5"/><rect x="692.75" y="1051.15" width="20.5" height="21.8" fill="#00ff66" stroke="#2fe596" stroke-width="1.5"/><rect x="727.75" y="1021.75" width="20.5" height="22.0" fill="#00ff66" stroke="#2fe596" stroke-width="1.5"/><rect x="727.75" y="1051.15" width="20.5" height="21.8" fill="#00ff66" stroke="#2fe596" stroke-width="1.5"/><rect x="759.35" y="1021.75" width="24.2" height="22.0" fill="#00ff66" stroke="#2fe596" stroke-width="1.5"/><rect x="759.35" y="1051.15" width="24.2" height="21.8" fill="#00ff66" stroke="#2fe596" stroke-width="1.5"/><rect x="713.75" y="853.45" width="24.2" height="17.2" fill="#00ff66" stroke="#2fe596" stroke-width="1.5"/><rect x="713.75" y="883.75" width="24.2" height="17.4" fill="#00ff66" stroke="#2fe596" stroke-width="1.5"/><rect x="744.15" y="853.45" width="21.9" height="17.2" fill="#00ff66" stroke="#2fe596" stroke-width="1.5"/><rect x="744.15" y="883.75" width="21.9" height="17.4" fill="#00ff66" stroke="#2fe596" stroke-width="1.5"/><rect x="772.15" y="853.45" width="21.9" height="17.2" fill="#00ff66" stroke="#2fe596" stroke-width="1.5"/><rect x="772.15" y="883.75" width="21.9" height="17.4" fill="#00ff66" stroke="#2fe596" stroke-width="1.5"/><rect x="721.3" y="743.2" width="67.1" height="67.1" fill="#00ff66" /><path d="M719 741 H791 V741" fill="none"/><rect x="700.6" y="741.6" width="17.4" height="7.2" rx="3.6" fill="#00ff66" stroke="#000" stroke-width="0.6"/><rect x="792" y="741.6" width="17" height="7.2" rx="3.6" fill="#00ff66" stroke="#000" stroke-width="0.6"/><rect x="720.5" y="724" width="6.8" height="14" rx="3.4" fill="#00ff66" stroke="#000" stroke-width="0.6"/><rect x="720.5" y="814" width="6.8" height="16" rx="3.4" fill="#00ff66" stroke="#000" stroke-width="0.6"/><rect x="700.6" y="750.6" width="17.4" height="7.2" rx="3.6" fill="#00ff66" stroke="#000" stroke-width="0.6"/><rect x="792" y="750.6" width="17" height="7.2" rx="3.6" fill="#00ff66" stroke="#000" stroke-width="0.6"/><rect x="729.5" y="724" width="6.8" height="14" rx="3.4" fill="#00ff66" stroke="#000" stroke-width="0.6"/><rect x="729.5" y="814" width="6.8" height="16" rx="3.4" fill="#00ff66" stroke="#000" stroke-width="0.6"/><rect x="700.6" y="759.7" width="17.4" height="7.2" rx="3.6" fill="#00ff66" stroke="#000" stroke-width="0.6"/><rect x="792" y="759.7" width="17" height="7.2" rx="3.6" fill="#00ff66" stroke="#000" stroke-width="0.6"/><rect x="738.6" y="724" width="6.8" height="14" rx="3.4" fill="#00ff66" stroke="#000" stroke-width="0.6"/><rect x="738.6" y="814" width="6.8" height="16" rx="3.4" fill="#00ff66" stroke="#000" stroke-width="0.6"/><rect x="700.6" y="768.7" width="17.4" height="7.2" rx="3.6" fill="#00ff66" stroke="#000" stroke-width="0.6"/><rect x="792" y="768.7" width="17" height="7.2" rx="3.6" fill="#00ff66" stroke="#000" stroke-width="0.6"/><rect x="747.6" y="724" width="6.8" height="14" rx="3.4" fill="#00ff66" stroke="#000" stroke-width="0.6"/><rect x="747.6" y="814" width="6.8" height="16" rx="3.4" fill="#00ff66" stroke="#000" stroke-width="0.6"/><rect x="700.6" y="777.7" width="17.4" height="7.2" rx="3.6" fill="#00ff66" stroke="#000" stroke-width="0.6"/><rect x="792" y="777.7" width="17" height="7.2" rx="3.6" fill="#00ff66" stroke="#000" stroke-width="0.6"/><rect x="756.6" y="724" width="6.8" height="14" rx="3.4" fill="#00ff66" stroke="#000" stroke-width="0.6"/><rect x="756.6" y="814" width="6.8" height="16" rx="3.4" fill="#00ff66" stroke="#000" stroke-width="0.6"/><rect x="700.6" y="786.8" width="17.4" height="7.2" rx="3.6" fill="#00ff66" stroke="#000" stroke-width="0.6"/><rect x="792" y="786.8" width="17" height="7.2" rx="3.6" fill="#00ff66" stroke="#000" stroke-width="0.6"/><rect x="765.6" y="724" width="6.8" height="14" rx="3.4" fill="#00ff66" stroke="#000" stroke-width="0.6"/><rect x="765.6" y="814" width="6.8" height="16" rx="3.4" fill="#00ff66" stroke="#000" stroke-width="0.6"/><rect x="700.6" y="795.8" width="17.4" height="7.2" rx="3.6" fill="#00ff66" stroke="#000" stroke-width="0.6"/><rect x="792" y="795.8" width="17" height="7.2" rx="3.6" fill="#00ff66" stroke="#000" stroke-width="0.6"/><rect x="774.7" y="724" width="6.8" height="14" rx="3.4" fill="#00ff66" stroke="#000" stroke-width="0.6"/><rect x="774.7" y="814" width="6.8" height="16" rx="3.4" fill="#00ff66" stroke="#000" stroke-width="0.6"/><rect x="700.6" y="804.8" width="17.4" height="7.2" rx="3.6" fill="#00ff66" stroke="#000" stroke-width="0.6"/><rect x="792" y="804.8" width="17" height="7.2" rx="3.6" fill="#00ff66" stroke="#000" stroke-width="0.6"/><rect x="783.7" y="724" width="6.8" height="14" rx="3.4" fill="#00ff66" stroke="#000" stroke-width="0.6"/><rect x="783.7" y="814" width="6.8" height="16" rx="3.4" fill="#00ff66" stroke="#000" stroke-width="0.6"/><rect x="837.05" y="726.75" width="23.2" height="22.5" fill="#00ff66" stroke="#2fe596" stroke-width="1.5"/><rect x="837.05" y="754.75" width="23.2" height="24.5" fill="#00ff66" stroke="#2fe596" stroke-width="1.5"/><rect x="837.05" y="788.75" width="23.2" height="18.0" fill="#00ff66" stroke="#2fe596" stroke-width="1.5"/><rect x="909.7" y="742" width="31.6" height="28.2" fill="#00ff66" /><rect x="909.7" y="777" width="31.6" height="27.0" fill="#00ff66" /><rect x="909.2" y="822.3" width="36.3" height="32.7" fill="#00ff66" /><rect x="907.75" y="872.15" width="40.5" height="31.3" fill="#00ff66" stroke="#2fe596" stroke-width="1.5"/><rect x="836.35" y="848.75" width="22.9" height="24.3" fill="#00ff66" stroke="#2fe596" stroke-width="1.5"/><rect x="865.55" y="848.75" width="21.9" height="24.3" fill="#00ff66" stroke="#2fe596" stroke-width="1.5"/><rect x="836.35" y="879.25" width="22.9" height="23.0" fill="#00ff66" stroke="#2fe596" stroke-width="1.5"/><rect x="865.55" y="879.25" width="21.9" height="23.0" fill="#00ff66" stroke="#2fe596" stroke-width="1.5"/><rect x="837.55" y="820.75" width="21.7" height="16.0" fill="#00ff66" stroke="#2fe596" stroke-width="1.5"/><rect x="1003.4" y="725" width="22.6" height="130.0" fill="#00ff66" /><rect x="1003" y="733.0" width="23" height="1.4" fill="#00a040"/><rect x="1003" y="742.8" width="23" height="1.4" fill="#00a040"/><rect x="1003" y="752.6" width="23" height="1.4" fill="#00a040"/><rect x="1003" y="762.4" width="23" height="1.4" fill="#00a040"/><rect x="1003" y="772.2" width="23" height="1.4" fill="#00a040"/><rect x="1003" y="782.0" width="23" height="1.4" fill="#00a040"/><rect x="1003" y="791.8" width="23" height="1.4" fill="#00a040"/><rect x="1003" y="801.6" width="23" height="1.4" fill="#00a040"/><rect x="1003" y="811.4" width="23" height="1.4" fill="#00a040"/><rect x="1003" y="821.2" width="23" height="1.4" fill="#00a040"/><rect x="1003" y="831.0" width="23" height="1.4" fill="#00a040"/><rect x="1003" y="840.8" width="23" height="1.4" fill="#00a040"/><rect x="1002.3" y="698" width="46.3" height="24.8" rx="12" fill="#00ff66" stroke="#000" stroke-width="1.2"/><rect x="1081.3" y="698" width="41.7" height="24.8" rx="12" fill="#00ff66" stroke="#000" stroke-width="1.2"/><rect x="1081" y="856" width="42.2" height="24.8" rx="12" fill="#00ff66" stroke="#000" stroke-width="1.2"/><rect x="1084.6" y="894.8" width="40.9" height="23.4" rx="12" fill="#00ff66" stroke="#000" stroke-width="1.2"/><rect x="1084.6" y="1058.5" width="40.9" height="24.5" rx="12" fill="#00ff66" stroke="#000" stroke-width="1.2"/><rect x="1002.8" y="858.6" width="44.4" height="22.2" rx="11" fill="#00ff66"/><rect x="1040" y="955.6" width="17.7" height="9.4" fill="#00ff66" /><rect x="1040" y="969.7" width="17.7" height="11.6" fill="#00ff66" /><rect x="1040" y="985" width="17.7" height="10.4" fill="#00ff66" /><rect x="1040" y="1000" width="17.7" height="9.4" fill="#00ff66" /><rect x="1040" y="1014" width="17.7" height="9.4" fill="#00ff66" /><rect x="815.25" y="1020.75" width="23.0" height="20.5" fill="#00ff66" stroke="#2fe596" stroke-width="1.5"/><rect x="815.25" y="1049.75" width="23.0" height="20.8" fill="#00ff66" stroke="#2fe596" stroke-width="1.5"/><rect x="846.75" y="1020.75" width="23.2" height="20.5" fill="#00ff66" stroke="#2fe596" stroke-width="1.5"/><rect x="846.75" y="1049.75" width="23.2" height="20.8" fill="#00ff66" stroke="#2fe596" stroke-width="1.5"/><rect x="876.05" y="1020.75" width="24.2" height="20.5" fill="#00ff66" stroke="#2fe596" stroke-width="1.5"/><rect x="876.05" y="1049.75" width="24.2" height="20.8" fill="#00ff66" stroke="#2fe596" stroke-width="1.5"/><rect x="906.45" y="1020.75" width="24.3" height="20.5" fill="#00ff66" stroke="#2fe596" stroke-width="1.5"/><rect x="906.45" y="1049.75" width="24.3" height="20.8" fill="#00ff66" stroke="#2fe596" stroke-width="1.5"/><circle cx="617.4" cy="776.9" r="26" fill="#00ff66"/><circle cx="589" cy="955.6" r="26" fill="#00ff66"/><circle cx="673.2" cy="954.5" r="25.5" fill="#00ff66"/><circle cx="940.2" cy="662.9" r="26" fill="#00ff66"/><circle cx="418.5" cy="1032.8" r="26" fill="#00ff66"/><circle cx="980.6" cy="1041" r="24.5" fill="#00ff66"/><circle cx="1048.4" cy="929.9" r="16" fill="#00ff66"/><circle cx="1048.4" cy="1049" r="17.5" fill="#00ff66"/><circle cx="89" cy="573" r="5.5" fill="#00ff66"/><circle cx="91" cy="636" r="5.5" fill="#00ff66"/><circle cx="90" cy="694.5" r="5.5" fill="#00ff66"/><circle cx="347" cy="584" r="5.5" fill="#00ff66"/><circle cx="417" cy="593" r="5.5" fill="#00ff66"/><circle cx="419" cy="637" r="5.5" fill="#00ff66"/><circle cx="424" cy="683" r="5.5" fill="#00ff66"/><circle cx="121" cy="749" r="5.5" fill="#00ff66"/><circle cx="172" cy="766" r="5.5" fill="#00ff66"/><circle cx="324" cy="770" r="5.5" fill="#00ff66"/><circle cx="379" cy="772" r="5.5" fill="#00ff66"/><circle cx="421" cy="730" r="5.5" fill="#00ff66"/><circle cx="381" cy="803" r="5.5" fill="#00ff66"/><circle cx="313" cy="810" r="5.5" fill="#00ff66"/><circle cx="87.5" cy="831.7" r="5.5" fill="#00ff66"/><circle cx="95.7" cy="941.6" r="5.5" fill="#00ff66"/><circle cx="95.7" cy="1013" r="5.5" fill="#00ff66"/><circle cx="98" cy="1075" r="5.5" fill="#00ff66"/><circle cx="146" cy="1084" r="5.5" fill="#00ff66"/><circle cx="199.8" cy="1085.4" r="5.5" fill="#00ff66"/><circle cx="254.8" cy="1086.6" r="5.5" fill="#00ff66"/><circle cx="348.3" cy="913.5" r="5.5" fill="#00ff66"/><circle cx="343.6" cy="877.3" r="5.5" fill="#00ff66"/><circle cx="308.5" cy="1058.5" r="5.5" fill="#00ff66"/><circle cx="349.5" cy="1052.7" r="5.5" fill="#00ff66"/><circle cx="374" cy="1086.6" r="5.5" fill="#00ff66"/><circle cx="408" cy="883" r="5.5" fill="#00ff66"/><circle cx="429" cy="952" r="5.5" fill="#00ff66"/><circle cx="483" cy="576" r="5.5" fill="#00ff66"/><circle cx="530.5" cy="574.8" r="5.5" fill="#00ff66"/><circle cx="568.8" cy="577" r="5.5" fill="#00ff66"/><circle cx="620.7" cy="571.4" r="5.5" fill="#00ff66"/><circle cx="540.6" cy="617.7" r="5.5" fill="#00ff66"/><circle cx="573.3" cy="617.7" r="5.5" fill="#00ff66"/><circle cx="477.4" cy="628" r="5.5" fill="#00ff66"/><circle cx="646.7" cy="622" r="5.5" fill="#00ff66"/><circle cx="531.6" cy="652.7" r="5.5" fill="#00ff66"/><circle cx="573.3" cy="652.7" r="5.5" fill="#00ff66"/><circle cx="633" cy="653.8" r="5.5" fill="#00ff66"/><circle cx="467.2" cy="660.6" r="5.5" fill="#00ff66"/><circle cx="651.2" cy="672" r="5.5" fill="#00ff66"/><circle cx="498.8" cy="681" r="5.5" fill="#00ff66"/><circle cx="721.2" cy="625.6" r="5.5" fill="#00ff66"/><circle cx="777.6" cy="617.7" r="5.5" fill="#00ff66"/><circle cx="755" cy="646" r="5.5" fill="#00ff66"/><circle cx="723.5" cy="663" r="5.5" fill="#00ff66"/><circle cx="603.8" cy="722.7" r="5.5" fill="#00ff66"/><circle cx="662.5" cy="756.5" r="5.5" fill="#00ff66"/><circle cx="641" cy="818.6" r="5.5" fill="#00ff66"/><circle cx="439" cy="765.6" r="5.5" fill="#00ff66"/><circle cx="544" cy="815" r="5.5" fill="#00ff66"/><circle cx="795.7" cy="697.9" r="5.5" fill="#00ff66"/><circle cx="444" cy="837.5" r="5.5" fill="#00ff66"/><circle cx="524.7" cy="960.3" r="5.5" fill="#00ff66"/><circle cx="544.6" cy="985" r="5.5" fill="#00ff66"/><circle cx="502.5" cy="1013" r="5.5" fill="#00ff66"/><circle cx="531.7" cy="1013" r="5.5" fill="#00ff66"/><circle cx="479" cy="1037.5" r="5.5" fill="#00ff66"/><circle cx="585.5" cy="1011.8" r="5.5" fill="#00ff66"/><circle cx="620.6" cy="1011.8" r="5.5" fill="#00ff66"/><circle cx="645" cy="1013" r="5.5" fill="#00ff66"/><circle cx="704.8" cy="859.8" r="5.5" fill="#00ff66"/><circle cx="740" cy="906.5" r="5.5" fill="#00ff66"/><circle cx="620.6" cy="920.6" r="5.5" fill="#00ff66"/><circle cx="624" cy="941.6" r="5.5" fill="#00ff66"/><circle cx="715.3" cy="975.5" r="5.5" fill="#00ff66"/><circle cx="734" cy="1013" r="5.5" fill="#00ff66"/><circle cx="771.4" cy="1011.8" r="5.5" fill="#00ff66"/><circle cx="675.6" cy="1082" r="5.5" fill="#00ff66"/><circle cx="465" cy="1086.6" r="5.5" fill="#00ff66"/><circle cx="589" cy="1086.6" r="5.5" fill="#00ff66"/><circle cx="619.4" cy="1082" r="5.5" fill="#00ff66"/><circle cx="652" cy="1085.4" r="5.5" fill="#00ff66"/><circle cx="708" cy="1086.6" r="5.5" fill="#00ff66"/><circle cx="757.4" cy="1085.4" r="5.5" fill="#00ff66"/><circle cx="542" cy="865.6" r="5.5" fill="#00ff66"/><circle cx="917.6" cy="583.9" r="5.5" fill="#00ff66"/><circle cx="1008" cy="588.4" r="5.5" fill="#00ff66"/><circle cx="1096" cy="588.4" r="5.5" fill="#00ff66"/><circle cx="891.6" cy="634.7" r="5.5" fill="#00ff66"/><circle cx="865.6" cy="682" r="5.5" fill="#00ff66"/><circle cx="1028.3" cy="625.7" r="5.5" fill="#00ff66"/><circle cx="1139.6" cy="630" r="5.5" fill="#00ff66"/><circle cx="799" cy="698" r="5.5" fill="#00ff66"/><circle cx="988.7" cy="710.3" r="5.5" fill="#00ff66"/><circle cx="991" cy="729.5" r="5.5" fill="#00ff66"/><circle cx="892.8" cy="738.6" r="5.5" fill="#00ff66"/><circle cx="923.2" cy="734" r="5.5" fill="#00ff66"/><circle cx="940.2" cy="734" r="5.5" fill="#00ff66"/><circle cx="816" cy="734" r="5.5" fill="#00ff66"/><circle cx="1038.4" cy="682" r="5.5" fill="#00ff66"/><circle cx="1081.3" cy="682" r="5.5" fill="#00ff66"/><circle cx="1151.3" cy="725" r="5.5" fill="#00ff66"/><circle cx="900.7" cy="814.2" r="5.5" fill="#00ff66"/><circle cx="804" cy="830.5" r="5.5" fill="#00ff66"/><circle cx="826.2" cy="850.4" r="5.5" fill="#00ff66"/><circle cx="805.2" cy="880.8" r="5.5" fill="#00ff66"/><circle cx="804" cy="896" r="5.5" fill="#00ff66"/><circle cx="818" cy="949.8" r="5.5" fill="#00ff66"/><circle cx="815.7" cy="990.7" r="5.5" fill="#00ff66"/><circle cx="862.5" cy="1009.4" r="5.5" fill="#00ff66"/><circle cx="928" cy="960.3" r="5.5" fill="#00ff66"/><circle cx="953.7" cy="954.4" r="5.5" fill="#00ff66"/><circle cx="985.2" cy="863.3" r="5.5" fill="#00ff66"/><circle cx="988.7" cy="885.5" r="5.5" fill="#00ff66"/><circle cx="969" cy="893.7" r="5.5" fill="#00ff66"/><circle cx="983" cy="938" r="5.5" fill="#00ff66"/><circle cx="1026" cy="925.2" r="5.5" fill="#00ff66"/><circle cx="1022.6" cy="941.6" r="5.5" fill="#00ff66"/><circle cx="1023.8" cy="958" r="5.5" fill="#00ff66"/><circle cx="979.4" cy="976.7" r="5.5" fill="#00ff66"/><circle cx="1021.5" cy="1016.4" r="5.5" fill="#00ff66"/><circle cx="1080" cy="834" r="5.5" fill="#00ff66"/><circle cx="1096.3" cy="983.7" r="5.5" fill="#00ff66"/><circle cx="1091.6" cy="1048" r="5.5" fill="#00ff66"/><circle cx="1144.2" cy="1050.3" r="5.5" fill="#00ff66"/><circle cx="1064.7" cy="1081.9" r="5.5" fill="#00ff66"/><circle cx="1151.2" cy="1083" r="5.5" fill="#00ff66"/><circle cx="947.8" cy="1084.2" r="5.5" fill="#00ff66"/><circle cx="983" cy="1084.2" r="5.5" fill="#00ff66"/><circle cx="888.2" cy="1083" r="5.5" fill="#00ff66"/><circle cx="804" cy="1027" r="5.5" fill="#00ff66"/><circle cx="802.9" cy="1065.5" r="5.5" fill="#00ff66"/><circle cx="350" cy="635" r="5.5" fill="#00ff66" stroke="#000" stroke-width="1.6"/><circle cx="350" cy="672" r="5.5" fill="#00ff66" stroke="#000" stroke-width="1.6"/><circle cx="357" cy="731" r="5.5" fill="#00ff66" stroke="#000" stroke-width="1.6"/><circle cx="402" cy="734" r="5.5" fill="#00ff66" stroke="#000" stroke-width="1.6"/><circle cx="405" cy="799" r="5.5" fill="#00ff66" stroke="#000" stroke-width="1.6"/><circle cx="360" cy="817.5" r="5.5" fill="#00ff66" stroke="#000" stroke-width="1.6"/><circle cx="304.5" cy="955.3" r="5.5" fill="#00ff66" stroke="#000" stroke-width="1.6"/><circle cx="370" cy="970" r="5.5" fill="#00ff66" stroke="#000" stroke-width="1.6"/><circle cx="360" cy="1001" r="5.5" fill="#00ff66" stroke="#000" stroke-width="1.6"/><circle cx="368.8" cy="901.6" r="5.5" fill="#00ff66" stroke="#000" stroke-width="1.6"/><circle cx="421.8" cy="932.7" r="5.5" fill="#00ff66" stroke="#000" stroke-width="1.6"/><circle cx="444.7" cy="740.7" r="5.5" fill="#00ff66" stroke="#000" stroke-width="1.6"/><circle cx="707.7" cy="694.5" r="5.5" fill="#00ff66" stroke="#000" stroke-width="1.6"/><circle cx="653.5" cy="721.6" r="5.5" fill="#00ff66" stroke="#000" stroke-width="1.6"/><circle cx="675" cy="717" r="5.5" fill="#00ff66" stroke="#000" stroke-width="1.6"/><circle cx="742.6" cy="705.8" r="5.5" fill="#00ff66" stroke="#000" stroke-width="1.6"/><circle cx="750.5" cy="713.7" r="5.5" fill="#00ff66" stroke="#000" stroke-width="1.6"/><circle cx="764" cy="701" r="5.5" fill="#00ff66" stroke="#000" stroke-width="1.6"/><circle cx="768.6" cy="713.7" r="5.5" fill="#00ff66" stroke="#000" stroke-width="1.6"/><circle cx="686.2" cy="789.3" r="5.5" fill="#00ff66" stroke="#000" stroke-width="1.6"/><circle cx="668" cy="806.2" r="5.5" fill="#00ff66" stroke="#000" stroke-width="1.6"/><circle cx="693" cy="814" r="5.5" fill="#00ff66" stroke="#000" stroke-width="1.6"/><circle cx="493" cy="786" r="5.5" fill="#00ff66" stroke="#000" stroke-width="1.6"/><circle cx="480.3" cy="870.3" r="5.5" fill="#00ff66" stroke="#000" stroke-width="1.6"/><circle cx="452.2" cy="944" r="5.5" fill="#00ff66" stroke="#000" stroke-width="1.6"/><circle cx="640.5" cy="836.4" r="5.5" fill="#00ff66" stroke="#000" stroke-width="1.6"/><circle cx="646.3" cy="848" r="5.5" fill="#00ff66" stroke="#000" stroke-width="1.6"/><circle cx="558.6" cy="1006" r="5.5" fill="#00ff66" stroke="#000" stroke-width="1.6"/><circle cx="721.2" cy="1062" r="5.5" fill="#00ff66" stroke="#000" stroke-width="1.6"/><circle cx="674.4" cy="1082" r="5.5" fill="#00ff66" stroke="#000" stroke-width="1.6"/><circle cx="757.4" cy="953.3" r="5.5" fill="#00ff66" stroke="#000" stroke-width="1.6"/><circle cx="757.4" cy="968.5" r="5.5" fill="#00ff66" stroke="#000" stroke-width="1.6"/><circle cx="751.6" cy="1000" r="5.5" fill="#00ff66" stroke="#000" stroke-width="1.6"/><circle cx="769" cy="848" r="5.5" fill="#00ff66" stroke="#000" stroke-width="1.6"/><circle cx="837.4" cy="622.3" r="5.5" fill="#00ff66" stroke="#000" stroke-width="1.6"/><circle cx="809.2" cy="675.3" r="5.5" fill="#00ff66" stroke="#000" stroke-width="1.6"/><circle cx="829.5" cy="708" r="5.5" fill="#00ff66" stroke="#000" stroke-width="1.6"/><circle cx="811.5" cy="720.5" r="5.5" fill="#00ff66" stroke="#000" stroke-width="1.6"/><circle cx="817" cy="762.3" r="5.5" fill="#00ff66" stroke="#000" stroke-width="1.6"/><circle cx="825" cy="774.7" r="5.5" fill="#00ff66" stroke="#000" stroke-width="1.6"/><circle cx="871.3" cy="788.3" r="5.5" fill="#00ff66" stroke="#000" stroke-width="1.6"/><circle cx="992" cy="762.3" r="5.5" fill="#00ff66" stroke="#000" stroke-width="1.6"/><circle cx="1052" cy="682" r="5.5" fill="#00ff66" stroke="#000" stroke-width="1.6"/><circle cx="1065.5" cy="682" r="5.5" fill="#00ff66" stroke="#000" stroke-width="1.6"/><circle cx="1101.6" cy="761" r="5.5" fill="#00ff66" stroke="#000" stroke-width="1.6"/><circle cx="1101.6" cy="774.7" r="5.5" fill="#00ff66" stroke="#000" stroke-width="1.6"/><circle cx="988.7" cy="792.8" r="5.5" fill="#00ff66" stroke="#000" stroke-width="1.6"/><circle cx="995.5" cy="809.7" r="5.5" fill="#00ff66" stroke="#000" stroke-width="1.6"/><circle cx="1034" cy="736.3" r="5.5" fill="#00ff66" stroke="#000" stroke-width="1.6"/><circle cx="1034.3" cy="842.2" r="5.5" fill="#00ff66" stroke="#000" stroke-width="1.6"/><circle cx="1054.2" cy="903" r="5.5" fill="#00ff66" stroke="#000" stroke-width="1.6"/><circle cx="895.2" cy="889" r="5.5" fill="#00ff66" stroke="#000" stroke-width="1.6"/><circle cx="848.5" cy="912.4" r="5.5" fill="#00ff66" stroke="#000" stroke-width="1.6"/><text transform="translate(103,655) scale(0.8,1)" font-size="21.7" textLength="31.2" lengthAdjust="spacing" fill="#a6f03c" fill-opacity="1" stroke="#00ad49" stroke-width="0.6" font-family="Liberation Sans">C4</text><text transform="translate(400,624.5) scale(0.8,1)" font-size="21.0" textLength="31.2" lengthAdjust="spacing" fill="#a6f03c" fill-opacity="1" stroke="#00ad49" stroke-width="0.6" font-family="Liberation Sans">R9</text><text transform="translate(400,657) scale(0.8,1)" font-size="21.0" textLength="47.5" lengthAdjust="spacing" fill="#a6f03c" fill-opacity="1" stroke="#00ad49" stroke-width="0.6" font-family="Liberation Sans">R10</text><text transform="translate(292,807) scale(0.8,1)" font-size="18.8" textLength="47.5" lengthAdjust="spacing" fill="#a6f03c" fill-opacity="1" stroke="#00ad49" stroke-width="0.6" font-family="Liberation Sans">C10</text><text transform="translate(344,810) scale(0.8,1)" font-size="20.3" textLength="32.5" lengthAdjust="spacing" fill="#a6f03c" fill-opacity="1" stroke="#00ad49" stroke-width="0.6" font-family="Liberation Sans">Q4</text><text transform="translate(149.5,948.6) scale(0.8,1)" font-size="20.3" textLength="30.6" lengthAdjust="spacing" fill="#a6f03c" fill-opacity="1" stroke="#00ad49" stroke-width="0.6" font-family="Liberation Sans">C8</text><text transform="translate(154,1020) scale(0.8,1)" font-size="20.3" textLength="30.9" lengthAdjust="spacing" fill="#a6f03c" fill-opacity="1" stroke="#00ad49" stroke-width="0.6" font-family="Liberation Sans">C5</text><text transform="translate(143.7,1064.4) scale(0.8,1)" font-size="20.9" textLength="49.6" lengthAdjust="spacing" fill="#a6f03c" fill-opacity="1" stroke="#00ad49" stroke-width="0.6" font-family="Liberation Sans">VD3</text><text transform="translate(292,880.8) scale(0.8,1)" font-size="20.3" textLength="30.9" lengthAdjust="spacing" fill="#a6f03c" fill-opacity="1" stroke="#00ad49" stroke-width="0.6" font-family="Liberation Sans">C9</text><text transform="translate(346,884) scale(0.8,1)" font-size="20.3" textLength="27.5" lengthAdjust="spacing" fill="#a6f03c" fill-opacity="1" stroke="#00ad49" stroke-width="0.6" font-family="Liberation Sans">Q1</text><text transform="translate(308.5,949.8) scale(0.8,1)" font-size="20.3" textLength="28.1" lengthAdjust="spacing" fill="#a6f03c" fill-opacity="1" stroke="#00ad49" stroke-width="0.6" font-family="Liberation Sans">R7</text><text transform="translate(313,1036) scale(0.8,1)" font-size="20.3" textLength="29.5" lengthAdjust="spacing" fill="#a6f03c" fill-opacity="1" stroke="#00ad49" stroke-width="0.6" font-family="Liberation Sans">R8</text><text transform="translate(400,1092) scale(0.8,1)" font-size="20.3" textLength="28.8" lengthAdjust="spacing" fill="#a6f03c" fill-opacity="1" stroke="#00ad49" stroke-width="0.6" font-family="Liberation Sans">J8</text><text transform="translate(445.8,582.7) scale(0.8,1)" font-size="21.3" textLength="46.5" lengthAdjust="spacing" fill="#a6f03c" fill-opacity="1" stroke="#00ad49" stroke-width="0.6" font-family="Liberation Sans">R15</text><text transform="translate(510,581.6) scale(0.8,1)" font-size="19.7" textLength="35.0" lengthAdjust="spacing" fill="#a6f03c" fill-opacity="1" stroke="#00ad49" stroke-width="0.6" font-family="Liberation Sans">C21</text><text transform="translate(574.5,582.7) scale(0.8,1)" font-size="18.4" textLength="35.3" lengthAdjust="spacing" fill="#a6f03c" fill-opacity="1" stroke="#00ad49" stroke-width="0.6" font-family="Liberation Sans">C23</text><text transform="translate(630,581.6) scale(0.8,1)" font-size="21.2" textLength="47.5" lengthAdjust="spacing" fill="#a6f03c" fill-opacity="1" stroke="#00ad49" stroke-width="0.6" font-family="Liberation Sans">R18</text><text transform="translate(717.8,580.5) scale(0.8,1)" font-size="16.7" textLength="35.3" lengthAdjust="spacing" fill="#a6f03c" fill-opacity="1" stroke="#00ad49" stroke-width="0.6" font-family="Liberation Sans">C15</text><text transform="translate(775.4,580.5) scale(0.8,1)" font-size="16.7" textLength="35.8" lengthAdjust="spacing" fill="#a6f03c" fill-opacity="1" stroke="#00ad49" stroke-width="0.6" font-family="Liberation Sans">C16</text><text transform="translate(839.7,580.5) scale(0.8,1)" font-size="19.6" textLength="35.4" lengthAdjust="spacing" fill="#a6f03c" fill-opacity="1" stroke="#00ad49" stroke-width="0.6" font-family="Liberation Sans">C14</text><text transform="translate(509,656) scale(0.8,1)" font-size="23.2" textLength="25.0" lengthAdjust="spacing" fill="#a6f03c" fill-opacity="1" stroke="#00ad49" stroke-width="0.6" font-family="Liberation Sans">U1</text><text transform="translate(487.6,731.7) scale(0.8,1)" font-size="21.3" textLength="49.2" lengthAdjust="spacing" fill="#a6f03c" fill-opacity="1" stroke="#00ad49" stroke-width="0.6" font-family="Liberation Sans">R16</text><text transform="translate(548.5,731.7) scale(0.8,1)" font-size="21.3" textLength="48.1" lengthAdjust="spacing" fill="#a6f03c" fill-opacity="1" stroke="#00ad49" stroke-width="0.6" font-family="Liberation Sans">R17</text><text transform="translate(615,730.6) scale(0.8,1)" font-size="19.7" textLength="36.9" lengthAdjust="spacing" fill="#a6f03c" fill-opacity="1" stroke="#00ad49" stroke-width="0.6" font-family="Liberation Sans">C22</text><text transform="translate(704,651.6) scale(0.8,1)" font-size="21.2" textLength="48.3" lengthAdjust="spacing" fill="#a6f03c" fill-opacity="1" stroke="#00ad49" stroke-width="0.6" font-family="Liberation Sans">VD1</text><text transform="translate(782,654) scale(0.8,1)" font-size="23.2" textLength="49.5" lengthAdjust="spacing" fill="#a6f03c" fill-opacity="1" stroke="#00ad49" stroke-width="0.6" font-family="Liberation Sans">VD2</text><text transform="translate(929,721.6) scale(0.8,1)" font-size="22.9" textLength="29.5" lengthAdjust="spacing" fill="#a6f03c" fill-opacity="1" stroke="#00ad49" stroke-width="0.6" font-family="Liberation Sans">J4</text><text transform="translate(452,850.4) scale(0.8,1)" font-size="23.8" textLength="43.8" lengthAdjust="spacing" fill="#a6f03c" fill-opacity="1" stroke="#00ad49" stroke-width="0.6" font-family="Liberation Sans">R11</text><text transform="translate(607.7,1013) scale(0.8,1)" font-size="22.2" textLength="26.4" lengthAdjust="spacing" fill="#a6f03c" fill-opacity="1" stroke="#00ad49" stroke-width="0.6" font-family="Liberation Sans">J7</text><text transform="translate(680,1013) scale(0.8,1)" font-size="22.2" textLength="23.8" lengthAdjust="spacing" fill="#a6f03c" fill-opacity="1" stroke="#00ad49" stroke-width="0.6" font-family="Liberation Sans">J1</text><text transform="translate(497.8,1004.8) rotate(-90) scale(0.8,1)" font-size="22.0" textLength="29.7" lengthAdjust="spacing" fill="#a6f03c" fill-opacity="1" stroke="#00ad49" stroke-width="0.6" font-family="Liberation Sans">R2</text><text transform="translate(520,1008) rotate(-90) scale(0.8,1)" font-size="18.8" textLength="35.0" lengthAdjust="spacing" fill="#a6f03c" fill-opacity="1" stroke="#00ad49" stroke-width="0.6" font-family="Liberation Sans">C20</text><text transform="translate(543,1004.8) rotate(-90) scale(0.8,1)" font-size="21.7" textLength="29.7" lengthAdjust="spacing" fill="#a6f03c" fill-opacity="1" stroke="#00ad49" stroke-width="0.6" font-family="Liberation Sans">R1</text><text transform="translate(562,915) rotate(-90) scale(0.8,1)" font-size="20.3" textLength="31.2" lengthAdjust="spacing" fill="#a6f03c" fill-opacity="1" stroke="#00ad49" stroke-width="0.6" font-family="Liberation Sans">C7</text><text transform="translate(747,986) rotate(-90) scale(0.8,1)" font-size="22.2" textLength="41.2" lengthAdjust="spacing" fill="#a6f03c" fill-opacity="1" stroke="#00ad49" stroke-width="0.6" font-family="Liberation Sans">R19</text><text transform="translate(734,948) rotate(-90) scale(0.8,1)" font-size="20.3" textLength="41.2" lengthAdjust="spacing" fill="#a6f03c" fill-opacity="1" stroke="#00ad49" stroke-width="0.6" font-family="Liberation Sans">C19</text><text transform="translate(761,938) rotate(-90) scale(0.8,1)" font-size="20.3" textLength="35.0" lengthAdjust="spacing" fill="#a6f03c" fill-opacity="1" stroke="#00ad49" stroke-width="0.6" font-family="Liberation Sans">C18</text><text transform="translate(789,940) rotate(-90) scale(0.8,1)" font-size="20.3" textLength="35.0" lengthAdjust="spacing" fill="#a6f03c" fill-opacity="1" stroke="#00ad49" stroke-width="0.6" font-family="Liberation Sans">C17</text><text transform="translate(808,985) rotate(-90) scale(0.8,1)" font-size="19.3" textLength="45.5" lengthAdjust="spacing" fill="#a6f03c" fill-opacity="1" stroke="#00ad49" stroke-width="0.6" font-family="Liberation Sans">R20</text><text transform="translate(818,986) rotate(-90) scale(0.8,1)" font-size="21.7" textLength="45.0" lengthAdjust="spacing" fill="#a6f03c" fill-opacity="1" stroke="#00ad49" stroke-width="0.6" font-family="Liberation Sans">R21</text><text transform="translate(842,986) rotate(-90) scale(0.8,1)" font-size="23.2" textLength="38.8" lengthAdjust="spacing" fill="#a6f03c" fill-opacity="1" stroke="#00ad49" stroke-width="0.6" font-family="Liberation Sans">C25</text><text transform="translate(827.4,1010.6) scale(0.8,1)" font-size="18.7" textLength="40.8" lengthAdjust="spacing" fill="#a6f03c" fill-opacity="1" stroke="#00ad49" stroke-width="0.6" font-family="Liberation Sans">LED1</text><text transform="translate(825,1087.7) scale(0.8,1)" font-size="18.4" textLength="46.9" lengthAdjust="spacing" fill="#a6f03c" fill-opacity="1" stroke="#00ad49" stroke-width="0.6" font-family="Liberation Sans">LED2</text><text transform="translate(888.2,1007) scale(0.8,1)" font-size="20.3" textLength="48.2" lengthAdjust="spacing" fill="#a6f03c" fill-opacity="1" stroke="#00ad49" stroke-width="0.6" font-family="Liberation Sans">R12</text><text transform="translate(883.5,1091) scale(0.8,1)" font-size="20.3" textLength="48.1" lengthAdjust="spacing" fill="#a6f03c" fill-opacity="1" stroke="#00ad49" stroke-width="0.6" font-family="Liberation Sans">R13</text><text transform="translate(957,986) scale(0.8,1)" font-size="22.0" textLength="28.0" lengthAdjust="spacing" fill="#a6f03c" fill-opacity="1" stroke="#00ad49" stroke-width="0.6" font-family="Liberation Sans">J5</text><text transform="translate(977,876) rotate(-90) scale(0.8,1)" font-size="23.6" textLength="26.2" lengthAdjust="spacing" fill="#a6f03c" fill-opacity="1" stroke="#00ad49" stroke-width="0.6" font-family="Liberation Sans">R4</text><text transform="translate(857.8,932) rotate(-90) scale(0.8,1)" font-size="23.8" textLength="23.8" lengthAdjust="spacing" fill="#a6f03c" fill-opacity="1" stroke="#00ad49" stroke-width="0.6" font-family="Liberation Sans">R</text><text transform="translate(887,932) rotate(-90) scale(0.8,1)" font-size="21.7" textLength="30.0" lengthAdjust="spacing" fill="#a6f03c" fill-opacity="1" stroke="#00ad49" stroke-width="0.6" font-family="Liberation Sans">R</text><text x="193" y="869" font-size="118" textLength="138" lengthAdjust="spacingAndGlyphs" fill="#98f2b6" fill-opacity="0.95" stroke="#98f2b6" stroke-opacity="0.95" stroke-width="3.5" font-family="Liberation Sans">GND</text><text transform="translate(96,792.7) scale(1,1)" font-size="35.8" textLength="40.6" lengthAdjust="spacingAndGlyphs" fill="#dcffe6" fill-opacity="1"  font-family="Liberation Sans">LXA</text><text transform="translate(145,795.5) scale(1,1)" font-size="18.1" textLength="21.0" lengthAdjust="spacingAndGlyphs" fill="#dcffe6" fill-opacity="1"  font-family="Liberation Sans">LXA</text><text transform="translate(96.5,878) scale(1,1)" font-size="17.4" textLength="39.0" lengthAdjust="spacingAndGlyphs" fill="#dcffe6" fill-opacity="1"  font-family="Liberation Sans">COIL_V</text><text transform="translate(264.5,815) rotate(-90) scale(1,1)" font-size="21.7" textLength="24.0" lengthAdjust="spacingAndGlyphs" fill="#dcffe6" fill-opacity="1"  font-family="Liberation Sans">LXB</text><text transform="translate(263,885) rotate(-90) scale(1,1)" font-size="18.8" textLength="22.0" lengthAdjust="spacingAndGlyphs" fill="#dcffe6" fill-opacity="1"  font-family="Liberation Sans">LXB</text><text transform="translate(263,954) rotate(-90) scale(1,1)" font-size="18.8" textLength="24.0" lengthAdjust="spacingAndGlyphs" fill="#dcffe6" fill-opacity="1"  font-family="Liberation Sans">LXB</text><text transform="translate(266,1020) rotate(-90) scale(1,1)" font-size="18.8" textLength="23.0" lengthAdjust="spacingAndGlyphs" fill="#dcffe6" fill-opacity="1"  font-family="Liberation Sans">LXB</text><text transform="translate(570,854) rotate(-90) scale(1,1)" font-size="20.3" textLength="26.0" lengthAdjust="spacingAndGlyphs" fill="#dcffe6" fill-opacity="1"  font-family="Liberation Sans">GND</text><text transform="translate(738.7,890) scale(1,1)" font-size="21.7" textLength="25.7" lengthAdjust="spacingAndGlyphs" fill="#dcffe6" fill-opacity="1"  font-family="Liberation Sans">GND</text><text transform="translate(742,755) rotate(90)" font-size="38" textLength="44" lengthAdjust="spacingAndGlyphs" fill="#b8ffd0" fill-opacity="0.8" font-family="Liberation Sans">GND</text><text transform="translate(657,962) scale(1,1)" font-size="23.2" textLength="32.0" lengthAdjust="spacingAndGlyphs" fill="#dcffe6" fill-opacity="1"  font-family="Liberation Sans">DEBUG</text><text transform="translate(403,1042) scale(1,1)" font-size="27.5" textLength="30.0" lengthAdjust="spacingAndGlyphs" fill="#dcffe6" fill-opacity="1"  font-family="Liberation Sans">NTC</text><text transform="translate(927,675) scale(1,1)" font-size="34.8" textLength="28.0" lengthAdjust="spacingAndGlyphs" fill="#dcffe6" fill-opacity="1"  font-family="Liberation Sans">FB</text><text transform="translate(915,764) scale(1,1)" font-size="20.3" textLength="23.0" lengthAdjust="spacingAndGlyphs" fill="#dcffe6" fill-opacity="1"  font-family="Liberation Sans">GND</text><text transform="translate(915,843.4) scale(1,1)" font-size="15.1" textLength="24.6" lengthAdjust="spacingAndGlyphs" fill="#dcffe6" fill-opacity="1"  font-family="Liberation Sans">VBUS</text><text transform="translate(1013,877) scale(1,1)" font-size="21.7" textLength="24.0" lengthAdjust="spacingAndGlyphs" fill="#dcffe6" fill-opacity="1"  font-family="Liberation Sans">GND</text><text transform="translate(1038,937) scale(1,1)" font-size="21.7" textLength="22.0" lengthAdjust="spacingAndGlyphs" fill="#dcffe6" fill-opacity="1"  font-family="Liberation Sans">GND</text><text transform="translate(965,1050) scale(1,1)" font-size="27.5" textLength="31.0" lengthAdjust="spacingAndGlyphs" fill="#dcffe6" fill-opacity="1"  font-family="Liberation Sans">GND</text><text transform="translate(1084.7,797.3) scale(1,1)" font-size="21.3" textLength="21.3" lengthAdjust="spacingAndGlyphs" fill="#dcffe6" fill-opacity="1"  font-family="Liberation Sans">GND</text>
<path d="M102 567h1v1h-1zM132 567h1v1h-1zM162 567h1v1h-1zM191 567h1v1h-1zM221 567h1v1h-1zM251 567h1v1h-1zM281 567h1v1h-1zM310 567h1v1h-1zM340 567h1v1h-1zM370 567h1v1h-1zM400 567h1v1h-1zM429 567h1v1h-1zM459 567h1v1h-1zM489 567h1v1h-1zM519 567h1v1h-1zM548 567h1v1h-1zM578 567h1v1h-1zM608 567h1v1h-1zM638 567h1v1h-1zM667 567h1v1h-1zM697 567h1v1h-1zM727 567h1v1h-1zM757 567h1v1h-1zM786 567h1v1h-1zM816 567h1v1h-1zM846 567h1v1h-1zM876 567h1v1h-1zM905 567h1v1h-1zM935 567h1v1h-1zM965 567h1v1h-1zM995 567h1v1h-1zM1025 567h1v1h-1zM1054 567h1v1h-1zM1084 567h1v1h-1zM1114 567h1v1h-1zM1144 567h1v1h-1zM102 597h1v1h-1zM132 597h1v1h-1zM162 597h1v1h-1zM191 597h1v1h-1zM221 597h1v1h-1zM251 597h1v1h-1zM281 597h1v1h-1zM310 597h1v1h-1zM340 597h1v1h-1zM370 597h1v1h-1zM400 597h1v1h-1zM429 597h1v1h-1zM459 597h1v1h-1zM489 597h1v1h-1zM519 597h1v1h-1zM548 597h1v1h-1zM578 597h1v1h-1zM608 597h1v1h-1zM638 597h1v1h-1zM667 597h1v1h-1zM697 597h1v1h-1zM727 597h1v1h-1zM757 597h1v1h-1zM786 597h1v1h-1zM816 597h1v1h-1zM846 597h1v1h-1zM876 597h1v1h-1zM905 597h1v1h-1zM935 597h1v1h-1zM965 597h1v1h-1zM995 597h1v1h-1zM1025 597h1v1h-1zM1054 597h1v1h-1zM1084 597h1v1h-1zM1114 597h1v1h-1zM1144 597h1v1h-1zM102 627h1v1h-1zM132 627h1v1h-1zM162 627h1v1h-1zM191 627h1v1h-1zM221 627h1v1h-1zM251 627h1v1h-1zM281 627h1v1h-1zM310 627h1v1h-1zM340 627h1v1h-1zM370 627h1v1h-1zM400 627h1v1h-1zM429 627h1v1h-1zM459 627h1v1h-1zM489 627h1v1h-1zM519 627h1v1h-1zM548 627h1v1h-1zM578 627h1v1h-1zM608 627h1v1h-1zM638 627h1v1h-1zM667 627h1v1h-1zM697 627h1v1h-1zM727 627h1v1h-1zM757 627h1v1h-1zM786 627h1v1h-1zM816 627h1v1h-1zM846 627h1v1h-1zM876 627h1v1h-1zM905 627h1v1h-1zM935 627h1v1h-1zM965 627h1v1h-1zM995 627h1v1h-1zM1025 627h1v1h-1zM1054 627h1v1h-1zM1084 627h1v1h-1zM1114 627h1v1h-1zM1144 627h1v1h-1zM102 657h1v1h-1zM132 657h1v1h-1zM162 657h1v1h-1zM191 657h1v1h-1zM221 657h1v1h-1zM251 657h1v1h-1zM281 657h1v1h-1zM310 657h1v1h-1zM340 657h1v1h-1zM370 657h1v1h-1zM400 657h1v1h-1zM429 657h1v1h-1zM459 657h1v1h-1zM489 657h1v1h-1zM519 657h1v1h-1zM548 657h1v1h-1zM578 657h1v1h-1zM608 657h1v1h-1zM638 657h1v1h-1zM667 657h1v1h-1zM697 657h1v1h-1zM727 657h1v1h-1zM757 657h1v1h-1zM786 657h1v1h-1zM816 657h1v1h-1zM846 657h1v1h-1zM876 657h1v1h-1zM905 657h1v1h-1zM935 657h1v1h-1zM965 657h1v1h-1zM995 657h1v1h-1zM1025 657h1v1h-1zM1054 657h1v1h-1zM1084 657h1v1h-1zM1114 657h1v1h-1zM1144 657h1v1h-1zM102 686h1v1h-1zM132 686h1v1h-1zM162 686h1v1h-1zM191 686h1v1h-1zM221 686h1v1h-1zM251 686h1v1h-1zM281 686h1v1h-1zM310 686h1v1h-1zM340 686h1v1h-1zM370 686h1v1h-1zM400 686h1v1h-1zM429 686h1v1h-1zM459 686h1v1h-1zM489 686h1v1h-1zM519 686h1v1h-1zM548 686h1v1h-1zM578 686h1v1h-1zM608 686h1v1h-1zM638 686h1v1h-1zM667 686h1v1h-1zM697 686h1v1h-1zM727 686h1v1h-1zM757 686h1v1h-1zM786 686h1v1h-1zM816 686h1v1h-1zM846 686h1v1h-1zM876 686h1v1h-1zM905 686h1v1h-1zM935 686h1v1h-1zM965 686h1v1h-1zM995 686h1v1h-1zM1025 686h1v1h-1zM1054 686h1v1h-1zM1084 686h1v1h-1zM1114 686h1v1h-1zM1144 686h1v1h-1zM102 716h1v1h-1zM132 716h1v1h-1zM162 716h1v1h-1zM191 716h1v1h-1zM221 716h1v1h-1zM251 716h1v1h-1zM281 716h1v1h-1zM310 716h1v1h-1zM340 716h1v1h-1zM370 716h1v1h-1zM400 716h1v1h-1zM429 716h1v1h-1zM459 716h1v1h-1zM489 716h1v1h-1zM519 716h1v1h-1zM548 716h1v1h-1zM578 716h1v1h-1zM608 716h1v1h-1zM638 716h1v1h-1zM667 716h1v1h-1zM697 716h1v1h-1zM727 716h1v1h-1zM757 716h1v1h-1zM786 716h1v1h-1zM816 716h1v1h-1zM846 716h1v1h-1zM876 716h1v1h-1zM905 716h1v1h-1zM935 716h1v1h-1zM965 716h1v1h-1zM995 716h1v1h-1zM1025 716h1v1h-1zM1054 716h1v1h-1zM1084 716h1v1h-1zM1114 716h1v1h-1zM1144 716h1v1h-1zM102 746h1v1h-1zM132 746h1v1h-1zM162 746h1v1h-1zM191 746h1v1h-1zM221 746h1v1h-1zM251 746h1v1h-1zM281 746h1v1h-1zM310 746h1v1h-1zM340 746h1v1h-1zM370 746h1v1h-1zM400 746h1v1h-1zM429 746h1v1h-1zM459 746h1v1h-1zM489 746h1v1h-1zM519 746h1v1h-1zM548 746h1v1h-1zM578 746h1v1h-1zM608 746h1v1h-1zM638 746h1v1h-1zM667 746h1v1h-1zM697 746h1v1h-1zM727 746h1v1h-1zM757 746h1v1h-1zM786 746h1v1h-1zM816 746h1v1h-1zM846 746h1v1h-1zM876 746h1v1h-1zM905 746h1v1h-1zM935 746h1v1h-1zM965 746h1v1h-1zM995 746h1v1h-1zM1025 746h1v1h-1zM1054 746h1v1h-1zM1084 746h1v1h-1zM1114 746h1v1h-1zM1144 746h1v1h-1zM102 776h1v1h-1zM132 776h1v1h-1zM162 776h1v1h-1zM191 776h1v1h-1zM221 776h1v1h-1zM251 776h1v1h-1zM281 776h1v1h-1zM310 776h1v1h-1zM340 776h1v1h-1zM370 776h1v1h-1zM400 776h1v1h-1zM429 776h1v1h-1zM459 776h1v1h-1zM489 776h1v1h-1zM519 776h1v1h-1zM548 776h1v1h-1zM578 776h1v1h-1zM608 776h1v1h-1zM638 776h1v1h-1zM667 776h1v1h-1zM697 776h1v1h-1zM727 776h1v1h-1zM757 776h1v1h-1zM786 776h1v1h-1zM816 776h1v1h-1zM846 776h1v1h-1zM876 776h1v1h-1zM905 776h1v1h-1zM935 776h1v1h-1zM965 776h1v1h-1zM995 776h1v1h-1zM1025 776h1v1h-1zM1054 776h1v1h-1zM1084 776h1v1h-1zM1114 776h1v1h-1zM1144 776h1v1h-1zM102 806h1v1h-1zM132 806h1v1h-1zM162 806h1v1h-1zM191 806h1v1h-1zM221 806h1v1h-1zM251 806h1v1h-1zM281 806h1v1h-1zM310 806h1v1h-1zM340 806h1v1h-1zM370 806h1v1h-1zM400 806h1v1h-1zM429 806h1v1h-1zM459 806h1v1h-1zM489 806h1v1h-1zM519 806h1v1h-1zM548 806h1v1h-1zM578 806h1v1h-1zM608 806h1v1h-1zM638 806h1v1h-1zM667 806h1v1h-1zM697 806h1v1h-1zM727 806h1v1h-1zM757 806h1v1h-1zM786 806h1v1h-1zM816 806h1v1h-1zM846 806h1v1h-1zM876 806h1v1h-1zM905 806h1v1h-1zM935 806h1v1h-1zM965 806h1v1h-1zM995 806h1v1h-1zM1025 806h1v1h-1zM1054 806h1v1h-1zM1084 806h1v1h-1zM1114 806h1v1h-1zM1144 806h1v1h-1zM102 835h1v1h-1zM132 835h1v1h-1zM162 835h1v1h-1zM191 835h1v1h-1zM221 835h1v1h-1zM251 835h1v1h-1zM281 835h1v1h-1zM310 835h1v1h-1zM340 835h1v1h-1zM370 835h1v1h-1zM400 835h1v1h-1zM429 835h1v1h-1zM459 835h1v1h-1zM489 835h1v1h-1zM519 835h1v1h-1zM548 835h1v1h-1zM578 835h1v1h-1zM608 835h1v1h-1zM638 835h1v1h-1zM667 835h1v1h-1zM697 835h1v1h-1zM727 835h1v1h-1zM757 835h1v1h-1zM786 835h1v1h-1zM816 835h1v1h-1zM846 835h1v1h-1zM876 835h1v1h-1zM905 835h1v1h-1zM935 835h1v1h-1zM965 835h1v1h-1zM995 835h1v1h-1zM1025 835h1v1h-1zM1054 835h1v1h-1zM1084 835h1v1h-1zM1114 835h1v1h-1zM1144 835h1v1h-1zM102 865h1v1h-1zM132 865h1v1h-1zM162 865h1v1h-1zM191 865h1v1h-1zM221 865h1v1h-1zM251 865h1v1h-1zM281 865h1v1h-1zM310 865h1v1h-1zM340 865h1v1h-1zM370 865h1v1h-1zM400 865h1v1h-1zM429 865h1v1h-1zM459 865h1v1h-1zM489 865h1v1h-1zM519 865h1v1h-1zM548 865h1v1h-1zM578 865h1v1h-1zM608 865h1v1h-1zM638 865h1v1h-1zM667 865h1v1h-1zM697 865h1v1h-1zM727 865h1v1h-1zM757 865h1v1h-1zM786 865h1v1h-1zM816 865h1v1h-1zM846 865h1v1h-1zM876 865h1v1h-1zM905 865h1v1h-1zM935 865h1v1h-1zM965 865h1v1h-1zM995 865h1v1h-1zM1025 865h1v1h-1zM1054 865h1v1h-1zM1084 865h1v1h-1zM1114 865h1v1h-1zM1144 865h1v1h-1zM102 895h1v1h-1zM132 895h1v1h-1zM162 895h1v1h-1zM191 895h1v1h-1zM221 895h1v1h-1zM251 895h1v1h-1zM281 895h1v1h-1zM310 895h1v1h-1zM340 895h1v1h-1zM370 895h1v1h-1zM400 895h1v1h-1zM429 895h1v1h-1zM459 895h1v1h-1zM489 895h1v1h-1zM519 895h1v1h-1zM548 895h1v1h-1zM578 895h1v1h-1zM608 895h1v1h-1zM638 895h1v1h-1zM667 895h1v1h-1zM697 895h1v1h-1zM727 895h1v1h-1zM757 895h1v1h-1zM786 895h1v1h-1zM816 895h1v1h-1zM846 895h1v1h-1zM876 895h1v1h-1zM905 895h1v1h-1zM935 895h1v1h-1zM965 895h1v1h-1zM995 895h1v1h-1zM1025 895h1v1h-1zM1054 895h1v1h-1zM1084 895h1v1h-1zM1114 895h1v1h-1zM1144 895h1v1h-1zM102 925h1v1h-1zM132 925h1v1h-1zM162 925h1v1h-1zM191 925h1v1h-1zM221 925h1v1h-1zM251 925h1v1h-1zM281 925h1v1h-1zM310 925h1v1h-1zM340 925h1v1h-1zM370 925h1v1h-1zM400 925h1v1h-1zM429 925h1v1h-1zM459 925h1v1h-1zM489 925h1v1h-1zM519 925h1v1h-1zM548 925h1v1h-1zM578 925h1v1h-1zM608 925h1v1h-1zM638 925h1v1h-1zM667 925h1v1h-1zM697 925h1v1h-1zM727 925h1v1h-1zM757 925h1v1h-1zM786 925h1v1h-1zM816 925h1v1h-1zM846 925h1v1h-1zM876 925h1v1h-1zM905 925h1v1h-1zM935 925h1v1h-1zM965 925h1v1h-1zM995 925h1v1h-1zM1025 925h1v1h-1zM1054 925h1v1h-1zM1084 925h1v1h-1zM1114 925h1v1h-1zM1144 925h1v1h-1zM102 955h1v1h-1zM132 955h1v1h-1zM162 955h1v1h-1zM191 955h1v1h-1zM221 955h1v1h-1zM251 955h1v1h-1zM281 955h1v1h-1zM310 955h1v1h-1zM340 955h1v1h-1zM370 955h1v1h-1zM400 955h1v1h-1zM429 955h1v1h-1zM459 955h1v1h-1zM489 955h1v1h-1zM519 955h1v1h-1zM548 955h1v1h-1zM578 955h1v1h-1zM608 955h1v1h-1zM638 955h1v1h-1zM667 955h1v1h-1zM697 955h1v1h-1zM727 955h1v1h-1zM757 955h1v1h-1zM786 955h1v1h-1zM816 955h1v1h-1zM846 955h1v1h-1zM876 955h1v1h-1zM905 955h1v1h-1zM935 955h1v1h-1zM965 955h1v1h-1zM995 955h1v1h-1zM1025 955h1v1h-1zM1054 955h1v1h-1zM1084 955h1v1h-1zM1114 955h1v1h-1zM1144 955h1v1h-1zM102 984h1v1h-1zM132 984h1v1h-1zM162 984h1v1h-1zM191 984h1v1h-1zM221 984h1v1h-1zM251 984h1v1h-1zM281 984h1v1h-1zM310 984h1v1h-1zM340 984h1v1h-1zM370 984h1v1h-1zM400 984h1v1h-1zM429 984h1v1h-1zM459 984h1v1h-1zM489 984h1v1h-1zM519 984h1v1h-1zM548 984h1v1h-1zM578 984h1v1h-1zM608 984h1v1h-1zM638 984h1v1h-1zM667 984h1v1h-1zM697 984h1v1h-1zM727 984h1v1h-1zM757 984h1v1h-1zM786 984h1v1h-1zM816 984h1v1h-1zM846 984h1v1h-1zM876 984h1v1h-1zM905 984h1v1h-1zM935 984h1v1h-1zM965 984h1v1h-1zM995 984h1v1h-1zM1025 984h1v1h-1zM1054 984h1v1h-1zM1084 984h1v1h-1zM1114 984h1v1h-1zM1144 984h1v1h-1zM102 1014h1v1h-1zM132 1014h1v1h-1zM162 1014h1v1h-1zM191 1014h1v1h-1zM221 1014h1v1h-1zM251 1014h1v1h-1zM281 1014h1v1h-1zM310 1014h1v1h-1zM340 1014h1v1h-1zM370 1014h1v1h-1zM400 1014h1v1h-1zM429 1014h1v1h-1zM459 1014h1v1h-1zM489 1014h1v1h-1zM519 1014h1v1h-1zM548 1014h1v1h-1zM578 1014h1v1h-1zM608 1014h1v1h-1zM638 1014h1v1h-1zM667 1014h1v1h-1zM697 1014h1v1h-1zM727 1014h1v1h-1zM757 1014h1v1h-1zM786 1014h1v1h-1zM816 1014h1v1h-1zM846 1014h1v1h-1zM876 1014h1v1h-1zM905 1014h1v1h-1zM935 1014h1v1h-1zM965 1014h1v1h-1zM995 1014h1v1h-1zM1025 1014h1v1h-1zM1054 1014h1v1h-1zM1084 1014h1v1h-1zM1114 1014h1v1h-1zM1144 1014h1v1h-1zM102 1044h1v1h-1zM132 1044h1v1h-1zM162 1044h1v1h-1zM191 1044h1v1h-1zM221 1044h1v1h-1zM251 1044h1v1h-1zM281 1044h1v1h-1zM310 1044h1v1h-1zM340 1044h1v1h-1zM370 1044h1v1h-1zM400 1044h1v1h-1zM429 1044h1v1h-1zM459 1044h1v1h-1zM489 1044h1v1h-1zM519 1044h1v1h-1zM548 1044h1v1h-1zM578 1044h1v1h-1zM608 1044h1v1h-1zM638 1044h1v1h-1zM667 1044h1v1h-1zM697 1044h1v1h-1zM727 1044h1v1h-1zM757 1044h1v1h-1zM786 1044h1v1h-1zM816 1044h1v1h-1zM846 1044h1v1h-1zM876 1044h1v1h-1zM905 1044h1v1h-1zM935 1044h1v1h-1zM965 1044h1v1h-1zM995 1044h1v1h-1zM1025 1044h1v1h-1zM1054 1044h1v1h-1zM1084 1044h1v1h-1zM1114 1044h1v1h-1zM1144 1044h1v1h-1zM102 1074h1v1h-1zM132 1074h1v1h-1zM162 1074h1v1h-1zM191 1074h1v1h-1zM221 1074h1v1h-1zM251 1074h1v1h-1zM281 1074h1v1h-1zM310 1074h1v1h-1zM340 1074h1v1h-1zM370 1074h1v1h-1zM400 1074h1v1h-1zM429 1074h1v1h-1zM459 1074h1v1h-1zM489 1074h1v1h-1zM519 1074h1v1h-1zM548 1074h1v1h-1zM578 1074h1v1h-1zM608 1074h1v1h-1zM638 1074h1v1h-1zM667 1074h1v1h-1zM697 1074h1v1h-1zM727 1074h1v1h-1zM757 1074h1v1h-1zM786 1074h1v1h-1zM816 1074h1v1h-1zM846 1074h1v1h-1zM876 1074h1v1h-1zM905 1074h1v1h-1zM935 1074h1v1h-1zM965 1074h1v1h-1zM995 1074h1v1h-1zM1025 1074h1v1h-1zM1054 1074h1v1h-1zM1084 1074h1v1h-1zM1114 1074h1v1h-1zM1144 1074h1v1h-1z" fill="#48e685"/>
</svg>
<div style="position:absolute;left:1366px;top:51px;width:28px;height:1136px;background:#2a2a2a"></div>
<div style="position:absolute;left:1366px;top:51px;width:2px;height:1136px;background:#4a4a4a"></div>
<div style="position:absolute;left:1392px;top:51px;width:2px;height:1136px;background:#4a4a4a"></div>
<div style="position:absolute;left:1368px;top:81px;width:24px;height:2px;background:#4a4a4a"></div>
<div style="position:absolute;left:1368px;top:1155px;width:24px;height:2px;background:#4a4a4a"></div>
<div style="position:absolute;left:1368px;top:53px;width:24px;height:28px;background:#2c2c2c"></div>
<div style="position:absolute;left:1368px;top:1157px;width:24px;height:28px;background:#2c2c2c"></div>
<svg style="left:1368px;top:53px" width="24" height="28"><path d="M4 18.5 L11 10 L18 18.5 Z" fill="#d8d8d8"/></svg>
<svg style="left:1368px;top:1157px" width="24" height="28"><path d="M4 9.5 L18 9.5 L11 18 Z" fill="#d8d8d8"/></svg>
<div style="position:absolute;left:1370px;top:557px;width:20px;height:100px;background:#686868"></div>
<div style="position:absolute;left:0px;top:1187px;width:1366px;height:28px;background:#2a2a2a"></div>
<div style="position:absolute;left:0px;top:1187px;width:1366px;height:2px;background:#4a4a4a"></div>
<div style="position:absolute;left:0px;top:1213px;width:1366px;height:2px;background:#4a4a4a"></div>
<div style="position:absolute;left:1333px;top:1189px;width:2px;height:24px;background:#4a4a4a"></div>
<div style="position:absolute;left:1335px;top:1189px;width:30px;height:24px;background:#2e2e2e"></div>
<svg style="left:1335px;top:1189px" width="30" height="24"><path d="M11 3 L19.5 10.5 L11 18 Z" fill="#d8d8d8"/></svg>
<div style="position:absolute;left:502px;top:1191px;width:100px;height:20px;background:#686868"></div>
<div style="position:absolute;left:1366px;top:1187px;width:28px;height:28px;background:#555555"></div>
<div style="position:absolute;left:0px;top:1215px;width:1394px;height:25px;background:#333333"></div>
<div style="position:absolute;left:0px;top:1215px;width:3px;height:25px;background:#222"></div>
<div style="position:absolute;left:1236px;top:1215px;width:38px;height:25px;background:#414141"></div>
<div style="position:absolute;left:1274px;top:1215px;width:2px;height:25px;background:#2a2a2a"></div>
<div style="position:absolute;left:1276px;top:1215px;width:38px;height:25px;background:#414141"></div>
<div style="position:absolute;left:1314px;top:1215px;width:80px;height:25px;background:#191919"></div>
<svg style="left:1236px;top:1215px" width="78" height="25"><path d="M22 11 L22 27 L14 19 Z M54 11 L54 27 L62 19 Z" fill="#d8d8d8"/></svg>
<div style="position:absolute;left:1394px;top:0px;width:4px;height:1240px;background:#626262"></div>
<div style="position:absolute;left:1398px;top:0px;width:623px;height:50px;background:#3b3b3b"></div>
<div style="position:absolute;left:1398px;top:0px;width:112px;height:49px;background:#1b1b1b"></div>
<div style="position:absolute;left:1512px;top:0px;width:156px;height:49px;background:#1b1b1b"></div>
<div style="position:absolute;left:1670px;top:0px;width:138px;height:49px;background:#b9b9b9"></div>
<div style="position:absolute;left:1398px;top:50px;width:623px;height:3px;background:#333333"></div>
<div style="position:absolute;left:1398px;top:49px;width:412px;height:1.5px;background:#474747"></div>
<div style="position:absolute;left:1808px;top:0px;width:2px;height:50px;background:#2f2f2f"></div>
<div style="position:absolute;left:1418px;top:9.16px;font-size:28.4px;line-height:28.4px;color:#ececec;white-space:nowrap;">Layer</div>
<div style="position:absolute;left:1532px;top:9.16px;font-size:28.4px;line-height:28.4px;color:#ececec;white-space:nowrap;">Selection</div>
<div style="position:absolute;left:1690.5px;top:9.16px;font-size:28.4px;line-height:28.4px;color:#000;white-space:nowrap;">Options</div>
<div style="position:absolute;left:1400px;top:53px;width:616px;height:46px;background:#111111"></div>
<div style="position:absolute;left:2016px;top:50px;width:5px;height:1190px;background:#333333"></div>
<div style="position:absolute;left:1412px;top:61.56px;font-size:28.4px;line-height:28.4px;color:#ececec;white-space:nowrap;">Options</div>
<svg style="left:1820px;top:53px" width="200" height="46"><path d="M15 35.5 L25.5 25" stroke="#10b040" stroke-width="2.2"/><path d="M18.4 16.5 L33.7 8 L41.5 15.3 L33.7 31.6 Z" fill="#10b040"/><rect x="66" y="19.8" width="16" height="4.2" fill="#d2d2d2"/><path fill-rule="evenodd" d="M116 12 H132 V26 H116 Z M118 16.2 V24 H130 V16.2 Z" fill="#d4d4d4"/><rect x="112" y="18" width="16" height="14" fill="#111"/><path fill-rule="evenodd" d="M112 18 H128 V32 H112 Z M114 22.2 V30 H126 V22.2 Z" fill="#d4d4d4"/><path d="M159.5 13.5 L176.5 30.5 M176.5 13.5 L159.5 30.5" stroke="#d6d6d6" stroke-width="4.6"/></svg>
<div style="position:absolute;left:1452px;top:115px;width:552px;height:44px;background:#262626;border:2px solid #474747;box-sizing:border-box"></div>
<div style="position:absolute;left:1960px;top:115px;width:2px;height:44px;background:#474747"></div>
<div style="position:absolute;left:1465px;top:122.46px;font-size:28.4px;line-height:28.4px;color:#ececec;white-space:nowrap;">Conductor</div>
<svg style="left:1962px;top:115px" width="40" height="44"><path d="M11.5 17.5 L26.5 17.5 L19 26 Z" fill="#d8d8d8"/></svg>
<div style="position:absolute;left:1452px;top:171px;width:552px;height:44px;background:#262626;border:2px solid #474747;box-sizing:border-box"></div>
<div style="position:absolute;left:1960px;top:171px;width:2px;height:44px;background:#474747"></div>
<div style="position:absolute;left:1465px;top:178.96px;font-size:28.4px;line-height:28.4px;color:#ececec;white-space:nowrap;">Top</div>
<svg style="left:1962px;top:171px" width="40" height="44"><path d="M11.5 17.5 L26.5 17.5 L19 26 Z" fill="#d8d8d8"/></svg>
<div style="position:absolute;left:1412px;top:179px;width:28px;height:28px;background:#ff0000;border:2px solid #474747;box-sizing:border-box"></div>
<div style="position:absolute;left:1412px;top:249px;width:592px;height:172px;border:2px solid #474747;box-sizing:border-box"></div>
<div style="position:absolute;left:1432px;top:240px;width:104px;height:16px;background:#2e2e2e"></div>
<div style="position:absolute;left:1442.5px;top:236.46px;font-size:28.4px;line-height:28.4px;color:#ececec;white-space:nowrap;">Option</div>
<div style="position:absolute;left:1434px;top:291px;width:264px;height:44px;background:#404040;border:2px solid #6b6b6b;box-sizing:border-box"></div>
<div style="position:absolute;left:1434px;top:299.46px;width:264px;text-align:center;font-size:28.4px;line-height:28.4px;color:#ececec;white-space:nowrap">Nets</div>
<div style="position:absolute;left:1718px;top:291px;width:264px;height:44px;background:#404040;border:2px solid #6b6b6b;box-sizing:border-box"></div>
<div style="position:absolute;left:1718px;top:299.46px;width:264px;text-align:center;font-size:28.4px;line-height:28.4px;color:#ececec;white-space:nowrap">Cells</div>
<div style="position:absolute;left:1434px;top:355px;width:264px;height:44px;background:#404040;border:2px solid #6b6b6b;box-sizing:border-box"></div>
<div style="position:absolute;left:1434px;top:363.46px;width:264px;text-align:center;font-size:28.4px;line-height:28.4px;color:#ececec;white-space:nowrap">Pins</div>
<div style="position:absolute;left:1718px;top:355px;width:264px;height:44px;background:#404040;border:2px solid #4c9bff;box-sizing:border-box"></div>
<div style="position:absolute;left:1718px;top:363.46px;width:264px;text-align:center;font-size:28.4px;line-height:28.4px;color:#ececec;white-space:nowrap">All</div>
</body></html>
